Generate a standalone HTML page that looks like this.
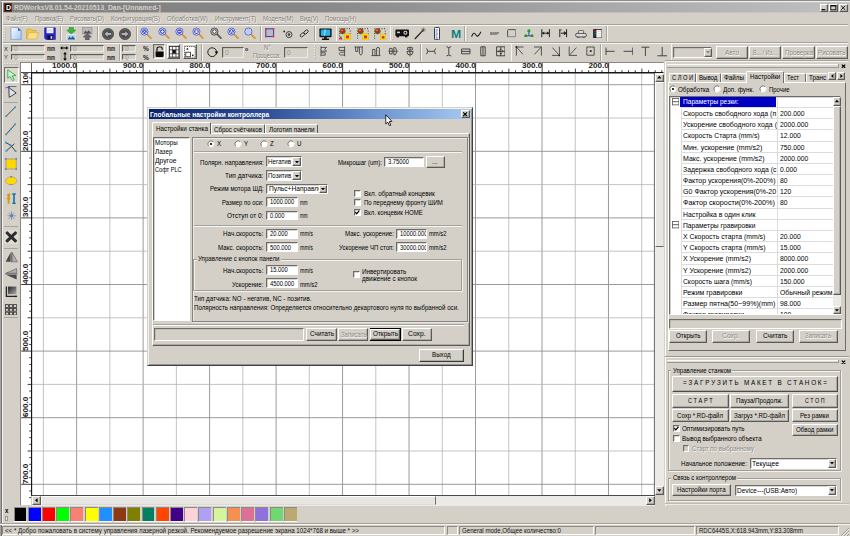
<!DOCTYPE html>
<html lang="ru"><head><meta charset="utf-8"><title>RDWorks</title>
<style>
*{box-sizing:border-box;margin:0;padding:0}
html,body{width:850px;height:536px;overflow:hidden;background:#d4d0c8;font-family:"Liberation Sans",sans-serif;font-size:7.3px;color:#000}
body{position:relative}
.a{position:absolute;display:block}
.t{white-space:pre;transform-origin:0 50%}
.btn{background:#d4d0c8;border-top:.7px solid #fff;border-left:.7px solid #fff;border-right:.8px solid #5a5a5a;border-bottom:.8px solid #5a5a5a;box-shadow:inset -.7px -.7px 0 #a09d96}
.fld{border-top:.8px solid #6e6c68;border-left:.8px solid #6e6c68;border-right:.7px solid #fff;border-bottom:.7px solid #fff;box-shadow:inset .6px .6px 0 #b0ada6}
.grp{border:.7px solid #a09d96;box-shadow:.7px .7px 0 #fff, inset .7px .7px 0 #fff}
</style></head>
<body>
<div class="a " style="left:0px;top:0px;width:850px;height:536px;background:#d4d0c8;"></div>
<div class="a " style="left:3px;top:2px;width:846px;height:11px;opacity:.45;background:linear-gradient(90deg,#808080 0%,#868686 35%,#a8a8a8 70%,#c0c0c0 100%);"></div>
<div class="a " style="left:3px;top:3px;width:846px;height:9px;background:linear-gradient(90deg,#808080 0%,#868686 35%,#a8a8a8 70%,#c0c0c0 100%);"></div>
<div class="a " style="left:4px;top:3.2px;width:8.4px;height:9px;background:#101010;border:.8px solid #7a2a14;"></div>
<span class="a t " style="left:5.65px;top:3.1px;font-size:7.6px;line-height:9.6px;color:#fff;font-weight:bold;transform:scaleX(0.93);">D</span>
<span class="a t " style="left:14px;top:3px;font-size:7.6px;line-height:9.6px;color:#d4d0c8;font-weight:bold;transform:scaleX(0.895);">RDWorksV8.01.54-20210513_Dan-[Unnamed-]</span>
<div class="a btn" style="left:820px;top:4px;width:8.2px;height:7.7px;"></div>
<div class="a btn" style="left:829px;top:4px;width:8.7px;height:7.7px;"></div>
<div class="a btn" style="left:839px;top:4px;width:8.9px;height:7.7px;"></div>
<svg class="a" style="left:820.2px;top:4.4px" width="8" height="7.2" viewBox="0 0 8 7.2"><rect x="1.6" y="5" width="3.6" height="1.2" fill="#000"/></svg>
<svg class="a" style="left:828.9px;top:4.4px" width="9" height="7.2" viewBox="0 0 9 7.2"><rect x="1.8" y="1.6" width="5" height="4.2" fill="none" stroke="#000" stroke-width=".8"/><rect x="1.4" y="1.2" width="5.8" height="1.2" fill="#000"/></svg>
<svg class="a" style="left:839.2px;top:4.3px" width="8.4" height="7.2" viewBox="0 0 8.4 7.2"><path d="M2.2 1.8 L6.2 5.8 M6.2 1.8 L2.2 5.8" stroke="#000" stroke-width=".9"/></svg>
<div class="a " style="left:0px;top:0px;width:850px;height:1px;background:#8c8c8c;"></div>
<div class="a " style="left:0px;top:0px;width:1px;height:536px;background:#a4a4a4;"></div>
<div class="a " style="left:1px;top:0px;width:1px;height:536px;background:#74726e;"></div>
<div class="a " style="left:2px;top:1px;width:0.8px;height:535px;background:#f4f3f0;"></div>
<div class="a " style="left:1px;top:1px;width:849px;height:1px;background:#efeeea;"></div>
<span class="a t " style="left:6px;top:13.95px;font-size:7.3px;line-height:9.3px;color:#7e7c76;transform:scaleX(0.792);text-shadow:.55px .55px 0 #fff;">Файл(F)</span>
<span class="a t " style="left:34.6px;top:13.95px;font-size:7.3px;line-height:9.3px;color:#7e7c76;transform:scaleX(0.82);text-shadow:.55px .55px 0 #fff;">Правка(E)</span>
<span class="a t " style="left:69.6px;top:13.95px;font-size:7.3px;line-height:9.3px;color:#7e7c76;transform:scaleX(0.815);text-shadow:.55px .55px 0 #fff;">Рисовать(D)</span>
<span class="a t " style="left:110.8px;top:13.95px;font-size:7.3px;line-height:9.3px;color:#7e7c76;transform:scaleX(0.834);text-shadow:.55px .55px 0 #fff;">Конфигурация(S)</span>
<span class="a t " style="left:166.8px;top:13.95px;font-size:7.3px;line-height:9.3px;color:#7e7c76;transform:scaleX(0.84);text-shadow:.55px .55px 0 #fff;">Обработка(W)</span>
<span class="a t " style="left:214.6px;top:13.95px;font-size:7.3px;line-height:9.3px;color:#7e7c76;transform:scaleX(0.835);text-shadow:.55px .55px 0 #fff;">Инструмент(T)</span>
<span class="a t " style="left:262.8px;top:13.95px;font-size:7.3px;line-height:9.3px;color:#7e7c76;transform:scaleX(0.824);text-shadow:.55px .55px 0 #fff;">Модель(M)</span>
<span class="a t " style="left:300px;top:13.95px;font-size:7.3px;line-height:9.3px;color:#7e7c76;transform:scaleX(0.811);text-shadow:.55px .55px 0 #fff;">Вид(V)</span>
<span class="a t " style="left:325px;top:13.95px;font-size:7.3px;line-height:9.3px;color:#7e7c76;transform:scaleX(0.819);text-shadow:.55px .55px 0 #fff;">Помощь(H)</span>
<div class="a " style="left:2.6px;top:23.8px;width:845.4px;height:0.7px;background:#a4a29c;"></div>
<div class="a " style="left:2.6px;top:24.5px;width:845.4px;height:0.7px;background:#f6f5f2;"></div>
<div class="a " style="left:2.6px;top:41.8px;width:845.4px;height:0.7px;background:#a4a29c;"></div>
<div class="a " style="left:2.6px;top:42.5px;width:845.4px;height:0.7px;background:#f6f5f2;"></div>
<svg class="a" style="left:4.2px;top:27px" width="2" height="13" viewBox="0 0 2 13"><rect x="0" y="0" width="1" height=".8" fill="#fff"/><rect x=".6" y="0.6" width=".8" height=".7" fill="#8c8a84"/><rect x="0" y="1.6" width="1" height=".8" fill="#fff"/><rect x=".6" y="2.2" width=".8" height=".7" fill="#8c8a84"/><rect x="0" y="3.2" width="1" height=".8" fill="#fff"/><rect x=".6" y="3.8" width=".8" height=".7" fill="#8c8a84"/><rect x="0" y="4.8" width="1" height=".8" fill="#fff"/><rect x=".6" y="5.4" width=".8" height=".7" fill="#8c8a84"/><rect x="0" y="6.4" width="1" height=".8" fill="#fff"/><rect x=".6" y="7" width=".8" height=".7" fill="#8c8a84"/><rect x="0" y="8" width="1" height=".8" fill="#fff"/><rect x=".6" y="8.6" width=".8" height=".7" fill="#8c8a84"/><rect x="0" y="9.6" width="1" height=".8" fill="#fff"/><rect x=".6" y="10.2" width=".8" height=".7" fill="#8c8a84"/><rect x="0" y="11.2" width="1" height=".8" fill="#fff"/><rect x=".6" y="11.8" width=".8" height=".7" fill="#8c8a84"/></svg>
<svg class="a" style="left:10px;top:26.8px" width="12" height="13.4" viewBox="0 0 12 13.4"><defs><linearGradient id="gnew" x1="0" y1="0" x2="1" y2="1"><stop offset="0" stop-color="#fff"/><stop offset="1" stop-color="#9cc4f0"/></linearGradient></defs><path d="M1 .6 H8 L11.2 3.8 V12.8 H1 Z" fill="url(#gnew)" stroke="#6a8ed0" stroke-width=".7"/><path d="M8 .6 V3.8 H11.2 Z" fill="#2f62c8"/></svg>
<svg class="a" style="left:26px;top:28px" width="13" height="12" viewBox="0 0 13 12"><path d="M.6 11 V2.4 Q.6 1 2 1 H4.6 L5.8 2.4 H10 V4.6" fill="#f2c84a" stroke="#c89a20" stroke-width=".6"/><path d="M.8 11 L3 4.6 H12.6 L10.2 11 Z" fill="#fbe08a" stroke="#d8a828" stroke-width=".6"/></svg>
<svg class="a" style="left:44px;top:26.8px" width="12" height="13.4" viewBox="0 0 12 13.4"><path d="M.6 .8 H11.4 V12.6 H2 L.6 11.2 Z" fill="#2828c8" stroke="#101090" stroke-width=".5"/><rect x="2.6" y=".8" width="6.8" height="5.4" fill="#fff"/><path d="M3.4 2.2 H8.6 M3.4 3.6 H8.6 M3.4 5 H8.6" stroke="#a8b0d8" stroke-width=".5"/><rect x="3.4" y="8.4" width="5.6" height="4.2" fill="#0a0a50"/><rect x="6.6" y="9.2" width="1.6" height="2.6" fill="#e8e8f8"/></svg>
<div class="a " style="left:60px;top:26px;width:0.7px;height:15px;background:#a4a29c;"></div>
<div class="a " style="left:60.7px;top:26px;width:0.7px;height:15px;background:#f6f5f2;"></div>
<svg class="a" style="left:65.6px;top:26.6px" width="10.6" height="13.6" viewBox="0 0 10.6 13.6"><path d="M3.2 .4 H7.4 V3.2 H9.8 L5.3 7 L.8 3.2 H3.2 Z" fill="#38b838" stroke="#1c7c1c" stroke-width=".5"/><rect x=".8" y="7.4" width="9.2" height="5.6" fill="#a8d0f0" stroke="#f4f4f4" stroke-width=".8"/><path d="M1.4 12.4 L3.6 9.6 L5 11.2 L6.6 9.2 L9.4 12.4 Z" fill="#285890"/></svg>
<svg class="a" style="left:82.2px;top:26.6px" width="10.6" height="13.6" viewBox="0 0 10.6 13.6"><rect x=".6" y=".6" width="9.4" height="6.4" fill="#b8b8b8" stroke="#8c8c8c" stroke-width=".6"/><path d="M1.4 6.4 L3.6 3.6 L5 5.2 L6.6 3.2 L9.4 6.4 Z" fill="#505050"/><path d="M5.3 6.6 L9.4 10 H7.2 V13.2 H3.4 V10 H1.2 Z" fill="#686868" stroke="#383838" stroke-width=".5"/></svg>
<div class="a " style="left:97.2px;top:26px;width:0.7px;height:15px;background:#a4a29c;"></div>
<div class="a " style="left:97.9px;top:26px;width:0.7px;height:15px;background:#f6f5f2;"></div>
<svg class="a" style="left:101.6px;top:27.6px" width="12" height="12" viewBox="0 0 12 12"><circle cx="6" cy="6" r="5.6" fill="#4c4c4c" stroke="#303030" stroke-width=".6"/><circle cx="6" cy="6" r="4.6" fill="none" stroke="#767676" stroke-width=".6"/><path d="M2.6 6 L5.8 3.2 V4.9 H9.2 V7.1 H5.8 V8.8 Z" fill="#b4b4b4"/></svg>
<svg class="a" style="left:118.6px;top:27.6px" width="12" height="12" viewBox="0 0 12 12"><circle cx="6" cy="6" r="5.6" fill="#4c4c4c" stroke="#303030" stroke-width=".6"/><circle cx="6" cy="6" r="4.6" fill="none" stroke="#767676" stroke-width=".6"/><g transform="translate(12,0) scale(-1,1)"><path d="M2.6 6 L5.8 3.2 V4.9 H9.2 V7.1 H5.8 V8.8 Z" fill="#b4b4b4"/></g></svg>
<div class="a " style="left:136px;top:26px;width:0.7px;height:15px;background:#a4a29c;"></div>
<div class="a " style="left:136.7px;top:26px;width:0.7px;height:15px;background:#f6f5f2;"></div>
<svg class="a" style="left:140px;top:27px" width="12" height="12.4" viewBox="0 0 12 12.4"><path d="M7 7.2 L10.9 11.2" stroke="#d8982c" stroke-width="1.8" stroke-linecap="round"/><circle cx="4.4" cy="4.6" r="3.6" fill="#dfe6fb" stroke="#5c58c4" stroke-width=".9"/><circle cx="4.4" cy="4.6" r="2.4" fill="#3450cc"/><path d="M3.3 3.5 L5.5 5.7 M5.5 3.5 L3.3 5.7" stroke="#fff" stroke-width=".7"/></svg>
<svg class="a" style="left:157.8px;top:27px" width="12" height="12.4" viewBox="0 0 12 12.4"><path d="M7 7.2 L10.9 11.2" stroke="#d8982c" stroke-width="1.8" stroke-linecap="round"/><circle cx="4.4" cy="4.6" r="3.6" fill="#dfe6fb" stroke="#5c58c4" stroke-width=".9"/><circle cx="4.4" cy="4.6" r="2.4" fill="#3450cc"/><path d="M3 4.6 H5.8 M4.4 3.2 V6" stroke="#fff" stroke-width=".9"/></svg>
<svg class="a" style="left:175.2px;top:27px" width="12" height="12.4" viewBox="0 0 12 12.4"><path d="M7 7.2 L10.9 11.2" stroke="#d8982c" stroke-width="1.8" stroke-linecap="round"/><circle cx="4.4" cy="4.6" r="3.6" fill="#dfe6fb" stroke="#5c58c4" stroke-width=".9"/><circle cx="4.4" cy="4.6" r="2.4" fill="#3450cc"/><path d="M3 4.6 H5.8" stroke="#fff" stroke-width=".9"/></svg>
<svg class="a" style="left:192.2px;top:27px" width="12" height="12.4" viewBox="0 0 12 12.4"><path d="M7 7.2 L10.9 11.2" stroke="#d8982c" stroke-width="1.8" stroke-linecap="round"/><circle cx="4.4" cy="4.6" r="3.6" fill="#dfe6fb" stroke="#5c58c4" stroke-width=".9"/><circle cx="4.4" cy="4.6" r="2.4" fill="#3450cc"/><rect x="3.5" y="3.2" width="2" height="2.8" fill="#f0f4ff"/></svg>
<svg class="a" style="left:210px;top:27px" width="12" height="12.4" viewBox="0 0 12 12.4"><path d="M7 7.2 L10.9 11.2" stroke="#5e5e5e" stroke-width="1.8" stroke-linecap="round"/><circle cx="4.4" cy="4.6" r="3.6" fill="#bcbcbc" stroke="#484848" stroke-width=".9"/><circle cx="4.4" cy="4.6" r="2.4" fill="#6e6e6e"/><path d="M3 4.6 H5.8 M4.4 3.2 V6" stroke="#fff" stroke-width=".9"/></svg>
<svg class="a" style="left:226.8px;top:27px" width="12" height="12.4" viewBox="0 0 12 12.4"><path d="M7 7.2 L10.9 11.2" stroke="#d8982c" stroke-width="1.8" stroke-linecap="round"/><circle cx="4.4" cy="4.6" r="3.6" fill="#dfe6fb" stroke="#5c58c4" stroke-width=".9"/><circle cx="4.4" cy="4.6" r="2.4" fill="#3450cc"/><path d="M3.4 6 L4.4 3.2 L5.4 6" stroke="#fff" stroke-width=".8" fill="none"/></svg>
<svg class="a" style="left:244.4px;top:27px" width="12" height="12.4" viewBox="0 0 12 12.4"><path d="M7 7.2 L10.9 11.2" stroke="#d8982c" stroke-width="1.8" stroke-linecap="round"/><circle cx="4.4" cy="4.6" r="3.6" fill="#dfe6fb" stroke="#5c58c4" stroke-width=".9"/><circle cx="4.4" cy="4.6" r="2.6" fill="#b4d0f8"/></svg>
<div class="a " style="left:260.4px;top:26px;width:0.7px;height:15px;background:#a4a29c;"></div>
<div class="a " style="left:261.1px;top:26px;width:0.7px;height:15px;background:#f6f5f2;"></div>
<svg class="a" style="left:265.4px;top:28.2px" width="9.4" height="9.4" viewBox="0 0 9.4 9.4"><rect x=".8" y=".8" width="7.8" height="7.8" rx="1" fill="#bcbcc0" stroke="#2838c8" stroke-width="1"/><rect x="0" y="0" width="1.8" height="1.8" fill="#e03030"/><rect x="7.6" y="7.6" width="1.8" height="1.8" fill="#e03030"/><rect x="7.6" y="0" width="1.8" height="1.8" fill="#e03030"/><rect x="0" y="7.6" width="1.8" height="1.8" fill="#e03030"/></svg>
<svg class="a" style="left:282.6px;top:29.6px" width="10" height="8.4" viewBox="0 0 10 8.4"><circle cx="1.2" cy="1.4" r=".9" fill="#222"/><circle cx="6" cy="4.6" r="3" fill="none" stroke="#333" stroke-width=".9"/><circle cx="6" cy="4.6" r="1.3" fill="#444"/></svg>
<svg class="a" style="left:299.4px;top:29px" width="10.4" height="9" viewBox="0 0 10.4 9"><ellipse cx="3.4" cy="5.8" rx="2.6" ry="1.5" transform="rotate(-40 3.4 5.8)" fill="none" stroke="#333" stroke-width=".9"/><ellipse cx="7" cy="3" rx="2.6" ry="1.5" transform="rotate(-40 7 3)" fill="none" stroke="#333" stroke-width=".9"/></svg>
<div class="a " style="left:314px;top:26px;width:0.7px;height:15px;background:#a4a29c;"></div>
<div class="a " style="left:314.7px;top:26px;width:0.7px;height:15px;background:#f6f5f2;"></div>
<svg class="a" style="left:318.8px;top:27.6px" width="13" height="12.6" viewBox="0 0 13 12.6"><rect x=".4" y=".4" width="12.2" height="8.8" rx=".8" fill="#111"/><rect x="1.8" y="1.6" width="9.4" height="6.2" fill="#28b0e8"/><path d="M5.4 1.6 L7.2 1.6 L6 7.8 L4.6 7.8 Z" fill="#7cd4f8"/><rect x="5" y="9.2" width="3" height="1.6" fill="#111"/><rect x="2.8" y="10.6" width="7.4" height="1.6" rx=".6" fill="#111"/></svg>
<div class="a " style="left:335.6px;top:26px;width:0.7px;height:15px;background:#a4a29c;"></div>
<div class="a " style="left:336.3px;top:26px;width:0.7px;height:15px;background:#f6f5f2;"></div>
<svg class="a" style="left:339.2px;top:27.6px" width="12.4" height="12.4" viewBox="0 0 12.4 12.4"><rect x="0.4" y="0.2" width=".9" height=".9" fill="#222"/><rect x="2.8" y="0.2" width=".9" height=".9" fill="#222"/><rect x="5.2" y="0.2" width=".9" height=".9" fill="#222"/><rect x="7.6" y="0.2" width=".9" height=".9" fill="#222"/><rect x="10" y="0.2" width=".9" height=".9" fill="#222"/><rect x="0.2" y="2.6" width=".9" height=".9" fill="#222"/><rect x="0.2" y="5" width=".9" height=".9" fill="#222"/><rect x="0.2" y="7.4" width=".9" height=".9" fill="#222"/><rect x="0.2" y="9.8" width=".9" height=".9" fill="#222"/><rect x="10.8" y="2.6" width=".9" height=".9" fill="#222"/><rect x="10.8" y="5" width=".9" height=".9" fill="#222"/><circle cx="3.6" cy="3.2" r="2.7" fill="#d81818" stroke="#209020" stroke-width=".8"/><circle cx="3" cy="2.4" r=".8" fill="#f88"/><rect x="5.4" y="5.8" width="6" height="6.2" fill="#f8e010" stroke="#c8b000" stroke-width=".4"/><rect x="7" y="7.4" width="3" height="3" fill="#e83030"/><path d="M.6 11.8 L1.8 8.6 L3 11.8 M1 10.8 H2.6" stroke="#d01818" stroke-width=".8" fill="none"/></svg>
<svg class="a" style="left:356.8px;top:27.6px" width="12.4" height="12.4" viewBox="0 0 12.4 12.4"><rect x="0.4" y="0.2" width=".9" height=".9" fill="#222"/><rect x="2.8" y="0.2" width=".9" height=".9" fill="#222"/><rect x="5.2" y="0.2" width=".9" height=".9" fill="#222"/><rect x="7.6" y="0.2" width=".9" height=".9" fill="#222"/><rect x="10" y="0.2" width=".9" height=".9" fill="#222"/><rect x="0.2" y="2.6" width=".9" height=".9" fill="#222"/><rect x="0.2" y="5" width=".9" height=".9" fill="#222"/><rect x="0.2" y="7.4" width=".9" height=".9" fill="#222"/><rect x="0.2" y="9.8" width=".9" height=".9" fill="#222"/><rect x="10.8" y="2.6" width=".9" height=".9" fill="#222"/><rect x="10.8" y="5" width=".9" height=".9" fill="#222"/><circle cx="3.6" cy="3.2" r="2.7" fill="#d81818" stroke="#209020" stroke-width=".8"/><circle cx="3" cy="2.4" r=".8" fill="#f88"/><rect x="5.4" y="5.8" width="6" height="6.2" fill="#f8e010" stroke="#c8b000" stroke-width=".4"/><rect x="7" y="7.4" width="3" height="3" fill="#e83030"/></svg>
<svg class="a" style="left:374.4px;top:27.6px" width="12.4" height="12.4" viewBox="0 0 12.4 12.4"><rect x="0.4" y="0.2" width=".9" height=".9" fill="#222"/><rect x="2.8" y="0.2" width=".9" height=".9" fill="#222"/><rect x="5.2" y="0.2" width=".9" height=".9" fill="#222"/><rect x="7.6" y="0.2" width=".9" height=".9" fill="#222"/><rect x="10" y="0.2" width=".9" height=".9" fill="#222"/><rect x="0.2" y="2.6" width=".9" height=".9" fill="#222"/><rect x="0.2" y="5" width=".9" height=".9" fill="#222"/><rect x="0.2" y="7.4" width=".9" height=".9" fill="#222"/><rect x="0.2" y="9.8" width=".9" height=".9" fill="#222"/><rect x="10.8" y="2.6" width=".9" height=".9" fill="#222"/><rect x="10.8" y="5" width=".9" height=".9" fill="#222"/><circle cx="3.6" cy="3.2" r="2.7" fill="#d81818" stroke="#209020" stroke-width=".8"/><circle cx="3" cy="2.4" r=".8" fill="#f88"/><rect x="6.4" y="6.6" width="5.2" height="5.4" fill="#f8e010" stroke="#c8b000" stroke-width=".4"/><rect x="7.8" y="8" width="2.6" height="2.6" fill="#e83030"/></svg>
<div class="a " style="left:389.6px;top:26px;width:0.7px;height:15px;background:#a4a29c;"></div>
<div class="a " style="left:390.3px;top:26px;width:0.7px;height:15px;background:#f6f5f2;"></div>
<svg class="a" style="left:392.2px;top:27px" width="2" height="13" viewBox="0 0 2 13"><rect x="0" y="0" width="1" height=".8" fill="#fff"/><rect x=".6" y="0.6" width=".8" height=".7" fill="#8c8a84"/><rect x="0" y="1.6" width="1" height=".8" fill="#fff"/><rect x=".6" y="2.2" width=".8" height=".7" fill="#8c8a84"/><rect x="0" y="3.2" width="1" height=".8" fill="#fff"/><rect x=".6" y="3.8" width=".8" height=".7" fill="#8c8a84"/><rect x="0" y="4.8" width="1" height=".8" fill="#fff"/><rect x=".6" y="5.4" width=".8" height=".7" fill="#8c8a84"/><rect x="0" y="6.4" width="1" height=".8" fill="#fff"/><rect x=".6" y="7" width=".8" height=".7" fill="#8c8a84"/><rect x="0" y="8" width="1" height=".8" fill="#fff"/><rect x=".6" y="8.6" width=".8" height=".7" fill="#8c8a84"/><rect x="0" y="9.6" width="1" height=".8" fill="#fff"/><rect x=".6" y="10.2" width=".8" height=".7" fill="#8c8a84"/><rect x="0" y="11.2" width="1" height=".8" fill="#fff"/><rect x=".6" y="11.8" width=".8" height=".7" fill="#8c8a84"/></svg>
<svg class="a" style="left:395.4px;top:29.2px" width="14.4" height="8.8" viewBox="0 0 14.4 8.8"><rect x=".4" y=".6" width="13.6" height="6.6" rx="1" fill="#111"/><circle cx="10.4" cy="3.8" r="2" fill="#ddd"/><circle cx="10.4" cy="3.8" r="1" fill="#111"/><rect x="2" y="2.6" width="3" height="1.6" fill="#ccc"/><rect x="1.6" y="7" width="2.4" height="1.4" fill="#111"/><rect x="10" y="7" width="2.4" height="1.4" fill="#111"/></svg>
<svg class="a" style="left:413.6px;top:26.8px" width="12" height="13" viewBox="0 0 12 13"><path d="M.8 12 L9.4 2.8" stroke="#222" stroke-width="1.2"/><path d="M9.4 .4 V5 M7.2 2.8 H11.6 M7.8 1.2 L11 4.4 M11 1.2 L7.8 4.4" stroke="#444" stroke-width=".5"/></svg>
<svg class="a" style="left:433.8px;top:26.8px" width="6" height="13.2" viewBox="0 0 6 13.2"><rect x=".5" y=".5" width="5" height="12.2" rx=".8" fill="#fff" stroke="#222" stroke-width=".9"/><path d="M1.6 3 H4 M1.6 5 H3.4 M1.6 7 H4 M1.6 9 H3.4 M1.6 11 H4" stroke="#3858e8" stroke-width=".9"/></svg>
<span class="a t " style="left:450.5px;top:27.5px;font-size:11px;line-height:13px;color:#108080;font-weight:bold;transform:scaleX(1.113);">M</span>
<div class="a " style="left:463.8px;top:26px;width:0.7px;height:15px;background:#a4a29c;"></div>
<div class="a " style="left:464.5px;top:26px;width:0.7px;height:15px;background:#f6f5f2;"></div>
<svg class="a" style="left:465.8px;top:27px" width="2" height="13" viewBox="0 0 2 13"><rect x="0" y="0" width="1" height=".8" fill="#fff"/><rect x=".6" y="0.6" width=".8" height=".7" fill="#8c8a84"/><rect x="0" y="1.6" width="1" height=".8" fill="#fff"/><rect x=".6" y="2.2" width=".8" height=".7" fill="#8c8a84"/><rect x="0" y="3.2" width="1" height=".8" fill="#fff"/><rect x=".6" y="3.8" width=".8" height=".7" fill="#8c8a84"/><rect x="0" y="4.8" width="1" height=".8" fill="#fff"/><rect x=".6" y="5.4" width=".8" height=".7" fill="#8c8a84"/><rect x="0" y="6.4" width="1" height=".8" fill="#fff"/><rect x=".6" y="7" width=".8" height=".7" fill="#8c8a84"/><rect x="0" y="8" width="1" height=".8" fill="#fff"/><rect x=".6" y="8.6" width=".8" height=".7" fill="#8c8a84"/><rect x="0" y="9.6" width="1" height=".8" fill="#fff"/><rect x=".6" y="10.2" width=".8" height=".7" fill="#8c8a84"/><rect x="0" y="11.2" width="1" height=".8" fill="#fff"/><rect x=".6" y="11.8" width=".8" height=".7" fill="#8c8a84"/></svg>
<svg class="a" style="left:471px;top:30.6px" width="10.6" height="7" viewBox="0 0 10.6 7"><path d="M.6 5.8 C2 1.6 3.4 1.4 4.8 3.8 S7.6 5.4 10 .8" fill="none" stroke="#222" stroke-width="1.1"/></svg>
<span class="a t " style="left:489.75px;top:30.8px;font-size:4.4px;line-height:6.4px;color:#5a5a5a;font-weight:bold;transform:scaleX(0.93);">BMP</span>
<svg class="a" style="left:506.8px;top:29.2px" width="9.6" height="8.8" viewBox="0 0 9.6 8.8"><rect x=".6" y=".6" width="8.2" height="7.4" rx=".8" fill="none" stroke="#444" stroke-width=".9"/><path d="M1.2 8.4 H9.2 V1.4" stroke="#fff" stroke-width=".5" fill="none"/></svg>
<svg class="a" style="left:524px;top:28.6px" width="9.8" height="8.8" viewBox="0 0 9.8 8.8"><path d="M4.9 2 V6.6 M1.6 6.8 H8.2" stroke="#2038c8" stroke-width=".9"/><circle cx="4.9" cy="1.8" r="1.6" fill="#18a028"/><circle cx="1.8" cy="6.8" r="1.6" fill="#18a028"/><circle cx="8" cy="6.8" r="1.6" fill="#18a028"/></svg>
<svg class="a" style="left:541.4px;top:29.4px" width="9.2" height="8.4" viewBox="0 0 9.2 8.4"><path d="M.8 .2 V8.2 M8.4 .2 V8.2 M1 4.2 H8.2" stroke="#222" stroke-width="1"/><path d="M1 4.2 L3.2 2.6 V5.8 Z M8.2 4.2 L6 2.6 V5.8 Z" fill="#222"/></svg>
<svg class="a" style="left:559.2px;top:29.4px" width="8.4" height="8.4" viewBox="0 0 8.4 8.4"><path d="M.8 .2 V8.2 M7.6 .2 V8.2 M2 4.2 H7.4" stroke="#222" stroke-width="1"/><path d="M.8 1 H3 M7.4 4.2 L5.2 2.6 V5.8 Z" stroke="#222" stroke-width=".6" fill="#222"/></svg>
<svg class="a" style="left:574.8px;top:29.6px" width="12" height="8.8" viewBox="0 0 12 8.8"><path d="M3.4 3.6 V1.2 Q3.4 .6 4.2 .6 H7.8 Q8.6 .6 8.6 1.2 V3.6" fill="#e8e8e8" stroke="#444" stroke-width=".8"/><rect x=".6" y="3.4" width="10.8" height="3.6" rx="1.6" fill="#d8d8d8" stroke="#444" stroke-width=".9"/><path d="M2 7 Q6 9.4 10 7" fill="#ccc" stroke="#444" stroke-width=".8"/></svg>
<svg class="a" style="left:592.8px;top:28.6px" width="9.6" height="9.6" viewBox="0 0 9.6 9.6"><rect x=".6" y=".6" width="8.4" height="8.4" fill="#fff" stroke="#222" stroke-width=".9"/><path d="M.8 .8 H3.4 V9 H.8 Z" fill="#222"/><rect x="1.4" y="1.6" width="1.4" height="1.4" fill="#e02020"/><rect x="1.4" y="3.8" width="1.4" height="1.4" fill="#20a020"/><rect x="1.4" y="6" width="1.4" height="1.4" fill="#2040e0"/><path d="M4.4 2.4 H8 M4.4 4.6 H8 M4.4 6.8 H8" stroke="#aaa" stroke-width=".5"/></svg>
<div class="a " style="left:606.4px;top:26px;width:0.7px;height:15px;background:#a4a29c;"></div>
<div class="a " style="left:607.1px;top:26px;width:0.7px;height:15px;background:#f6f5f2;"></div>
<span class="a t " style="left:4.2px;top:44.8px;font-size:6.2px;line-height:8.2px;color:#1e1e28;transform:scaleX(0.93);">X</span>
<span class="a t " style="left:4.2px;top:53.4px;font-size:6.2px;line-height:8.2px;color:#1e1e28;transform:scaleX(0.93);">Y</span>
<div class="a fld" style="left:11.2px;top:44.8px;width:33.4px;height:7px;background:#d4d0c8;border-right-color:#eceae6;border-bottom-color:#eceae6;border-top-color:#5e5c58;border-left-color:#5e5c58;"></div>
<span class="a t " style="left:13.8px;top:43.85px;font-size:7.3px;line-height:9.3px;color:#9a978f;transform:scaleX(0.93);">0</span>
<div class="a fld" style="left:11.2px;top:53.6px;width:33.4px;height:6.8px;background:#d4d0c8;border-right-color:#eceae6;border-bottom-color:#eceae6;border-top-color:#5e5c58;border-left-color:#5e5c58;"></div>
<span class="a t " style="left:13.8px;top:52.55px;font-size:7.3px;line-height:9.3px;color:#9a978f;transform:scaleX(0.93);">0</span>
<span class="a t " style="left:47px;top:44px;font-size:7px;line-height:9px;color:#1a1a1a;font-weight:bold;transform:scaleX(0.643);">mm</span>
<span class="a t " style="left:47px;top:52.7px;font-size:7px;line-height:9px;color:#1a1a1a;font-weight:bold;transform:scaleX(0.643);">mm</span>
<div class="a " style="left:60.2px;top:43.6px;width:8.4px;height:17.4px;background:#c4c0b8;"></div>
<svg class="a" style="left:60.4px;top:44.4px" width="8.4" height="8" viewBox="0 0 8.4 8"><path d="M1 4 H7.4" stroke="#000" stroke-width="1"/><path d="M.2 4 L2.3 2.2 V5.8 Z M8.2 4 L6.1 2.2 V5.8 Z" fill="#000"/></svg>
<svg class="a" style="left:61.6px;top:52.4px" width="6" height="8.8" viewBox="0 0 6 8.8"><path d="M3 1 V7.8" stroke="#000" stroke-width="1"/><path d="M3 .1 L1.2 2.2 H4.8 Z M3 8.7 L1.2 6.6 H4.8 Z" fill="#000"/></svg>
<div class="a fld" style="left:70.2px;top:44.8px;width:33.6px;height:7px;background:#d4d0c8;border-right-color:#eceae6;border-bottom-color:#eceae6;border-top-color:#5e5c58;border-left-color:#5e5c58;"></div>
<span class="a t " style="left:72.8px;top:43.85px;font-size:7.3px;line-height:9.3px;color:#9a978f;transform:scaleX(0.93);">0</span>
<div class="a fld" style="left:70.2px;top:53.6px;width:33.6px;height:6.8px;background:#d4d0c8;border-right-color:#eceae6;border-bottom-color:#eceae6;border-top-color:#5e5c58;border-left-color:#5e5c58;"></div>
<span class="a t " style="left:72.8px;top:52.55px;font-size:7.3px;line-height:9.3px;color:#9a978f;transform:scaleX(0.93);">0</span>
<span class="a t " style="left:107px;top:44px;font-size:7px;line-height:9px;color:#1a1a1a;font-weight:bold;transform:scaleX(0.643);">mm</span>
<span class="a t " style="left:107px;top:52.7px;font-size:7px;line-height:9px;color:#1a1a1a;font-weight:bold;transform:scaleX(0.643);">mm</span>
<div class="a " style="left:119.4px;top:44px;width:0.7px;height:17px;background:#a4a29c;"></div>
<div class="a " style="left:120.1px;top:44px;width:0.7px;height:17px;background:#f6f5f2;"></div>
<div class="a fld" style="left:122px;top:44.8px;width:14.4px;height:7px;background:#d4d0c8;border-right-color:#eceae6;border-bottom-color:#eceae6;border-top-color:#5e5c58;border-left-color:#5e5c58;"></div>
<span class="a t " style="left:124.6px;top:43.85px;font-size:7.3px;line-height:9.3px;color:#9a978f;transform:scaleX(0.93);">0</span>
<div class="a fld" style="left:122px;top:53.6px;width:14.4px;height:6.8px;background:#d4d0c8;border-right-color:#eceae6;border-bottom-color:#eceae6;border-top-color:#5e5c58;border-left-color:#5e5c58;"></div>
<span class="a t " style="left:124.6px;top:52.55px;font-size:7.3px;line-height:9.3px;color:#9a978f;transform:scaleX(0.93);">0</span>
<span class="a t " style="left:143px;top:44.3px;font-size:7px;line-height:9px;color:#222;font-weight:bold;transform:scaleX(0.93);">%</span>
<span class="a t " style="left:143px;top:52.9px;font-size:7px;line-height:9px;color:#222;font-weight:bold;transform:scaleX(0.93);">%</span>
<div class="a fld" style="left:152.6px;top:44.4px;width:12.8px;height:15px;background:#d4d0c8;"></div>
<svg class="a" style="left:153.6px;top:45.4px" width="11" height="13.4" viewBox="0 0 11 13.4"><path d="M3 6.4 V4 Q3 2 5 2 H6.6 Q8.2 2 8.2 3.8 V4.8" fill="none" stroke="#111" stroke-width="1.2"/><path d="M1.6 6.4 H9.6 V10.8 Q9.6 12 8.4 12 H2.8 Q1.6 12 1.6 10.8 Z" fill="#0a0a0a"/></svg>
<div class="a btn" style="left:167.4px;top:44.4px;width:12.6px;height:15px;"></div>
<svg class="a" style="left:168.6px;top:46px" width="10.4" height="11.6" viewBox="0 0 10.4 11.6"><rect x=".5" y=".5" width="9.4" height="10.6" fill="#fff" stroke="#222" stroke-width=".8"/><path d="M3.4 .6 V11 M7 .6 V11 M.6 3.8 H9.8 M.6 7.8 H9.8" stroke="#222" stroke-width=".7"/><rect x="3.6" y="4" width="3.2" height="3.6" fill="#111"/></svg>
<div class="a btn" style="left:183px;top:44.4px;width:14px;height:15px;"></div>
<svg class="a" style="left:184.2px;top:45.6px" width="11.6" height="12.4" viewBox="0 0 11.6 12.4"><rect x=".5" y=".5" width="10.6" height="11.4" fill="#fff" stroke="#333" stroke-width=".8" stroke-dasharray="1.2 1"/><rect x="1.8" y="6.2" width="4.6" height="4.6" fill="#fff" stroke="#222" stroke-width=".8"/><rect x="2.6" y="2.2" width="1.6" height="1.6" fill="#222"/><rect x="8" y="8.6" width="1.6" height="1.6" fill="#222"/></svg>
<div class="a " style="left:201.4px;top:44px;width:0.7px;height:17px;background:#a4a29c;"></div>
<div class="a " style="left:202.1px;top:44px;width:0.7px;height:17px;background:#f6f5f2;"></div>
<svg class="a" style="left:207.4px;top:47px" width="12" height="10.6" viewBox="0 0 12 10.6"><circle cx="5.2" cy="5.2" r="4.4" fill="none" stroke="#111" stroke-width=".9"/><path d="M7.6 4.6 H11.4 L9.5 7.6 Z" fill="#111"/></svg>
<div class="a fld" style="left:222.2px;top:46.8px;width:21.6px;height:10.8px;background:#d4d0c8;border-right-color:#eceae6;border-bottom-color:#eceae6;border-top-color:#5e5c58;border-left-color:#5e5c58;"></div>
<span class="a t " style="left:224.8px;top:47.75px;font-size:7.3px;line-height:9.3px;color:#9a978f;transform:scaleX(0.93);">0</span>
<span class="a t " style="left:244.8px;top:45.8px;font-size:5.6px;line-height:7.6px;color:#111;font-weight:bold;transform:scaleX(0.93);">o</span>
<span class="a t " style="left:263.96px;top:44px;font-size:6.6px;line-height:8.6px;color:#7e7c76;transform:scaleX(0.93);text-shadow:.5px .5px 0 #fff;">N°</span>
<span class="a t " style="left:253.4px;top:51.5px;font-size:6.8px;line-height:8.8px;color:#7e7c76;transform:scaleX(0.849);text-shadow:.5px .5px 0 #fff;">Процесса:</span>
<div class="a fld" style="left:284.2px;top:46.8px;width:23.8px;height:10.8px;background:#d4d0c8;border-right-color:#eceae6;border-bottom-color:#eceae6;border-top-color:#5e5c58;border-left-color:#5e5c58;"></div>
<span class="a t " style="left:286.8px;top:47.75px;font-size:7.3px;line-height:9.3px;color:#9a978f;transform:scaleX(0.93);">0</span>
<svg class="a" style="left:314.2px;top:45px" width="2" height="15" viewBox="0 0 2 15"><rect x="0" y="0" width="1" height=".8" fill="#fff"/><rect x=".6" y="0.6" width=".8" height=".7" fill="#8c8a84"/><rect x="0" y="1.6" width="1" height=".8" fill="#fff"/><rect x=".6" y="2.2" width=".8" height=".7" fill="#8c8a84"/><rect x="0" y="3.2" width="1" height=".8" fill="#fff"/><rect x=".6" y="3.8" width=".8" height=".7" fill="#8c8a84"/><rect x="0" y="4.8" width="1" height=".8" fill="#fff"/><rect x=".6" y="5.4" width=".8" height=".7" fill="#8c8a84"/><rect x="0" y="6.4" width="1" height=".8" fill="#fff"/><rect x=".6" y="7" width=".8" height=".7" fill="#8c8a84"/><rect x="0" y="8" width="1" height=".8" fill="#fff"/><rect x=".6" y="8.6" width=".8" height=".7" fill="#8c8a84"/><rect x="0" y="9.6" width="1" height=".8" fill="#fff"/><rect x=".6" y="10.2" width=".8" height=".7" fill="#8c8a84"/><rect x="0" y="11.2" width="1" height=".8" fill="#fff"/><rect x=".6" y="11.8" width=".8" height=".7" fill="#8c8a84"/><rect x="0" y="12.8" width="1" height=".8" fill="#fff"/><rect x=".6" y="13.4" width=".8" height=".7" fill="#8c8a84"/></svg>
<svg class="a" style="left:320.4px;top:46.4px" width="8.4" height="10.6" viewBox="0 0 8.4 10.6"><path d="M1 .4 V10.2 M1 1.4 H6.6 L4.6 3.4 L6.6 5.2 H1 M1 6.8 H5.2 V9.2 H1" stroke="#333" stroke-width="0.79" fill="none"/></svg>
<svg class="a" style="left:337px;top:46.4px" width="8.8" height="10.6" viewBox="0 0 8.8 10.6"><path d="M7.6 .4 V10.2 M7.6 1.4 H2 V4.4 H7.6 M7.6 6.2 H3.4 L2 7.6 L3.4 9 H7.6" stroke="#333" stroke-width="0.79" fill="none"/></svg>
<svg class="a" style="left:353.6px;top:46.4px" width="9.8" height="10.6" viewBox="0 0 9.8 10.6"><path d="M.4 1 H9.4 M1.6 1 V5.4 H3.8 V1 M5.4 1 V7.4 L6.8 9.2 L8.2 7.4 V1" stroke="#333" stroke-width="0.79" fill="none"/></svg>
<svg class="a" style="left:371.4px;top:46.4px" width="9.8" height="10.6" viewBox="0 0 9.8 10.6"><path d="M.4 9.6 H9.4 M1.6 9.6 V3.4 H4 V9.6 M5.6 9.6 V2 Q7 .4 8.4 2 V9.6" stroke="#333" stroke-width="0.79" fill="none"/></svg>
<svg class="a" style="left:388.2px;top:46.4px" width="9.8" height="10.6" viewBox="0 0 9.8 10.6"><path d="M.4 5.2 H9.6 M1.6 2.4 H4.2 V8 H1.6 Z M5.8 1.6 H7.4 L9 5.2 L7.4 8.8 H5.8 Z" stroke="#333" stroke-width="0.79" fill="none"/></svg>
<svg class="a" style="left:406.2px;top:46.4px" width="8" height="10.6" viewBox="0 0 8 10.6"><path d="M4 .4 V10.4 M1.6 1.6 H6.4 V4 H1.6 Z M.8 5.6 H7.2 L6 8.6 H2 Z" stroke="#333" stroke-width="0.79" fill="none"/></svg>
<div class="a " style="left:420.2px;top:44px;width:0.7px;height:17px;background:#a4a29c;"></div>
<div class="a " style="left:420.9px;top:44px;width:0.7px;height:17px;background:#f6f5f2;"></div>
<svg class="a" style="left:426px;top:46.4px" width="10.2" height="10.6" viewBox="0 0 10.2 10.6"><path d="M.6 2.4 Q3 5.2 .6 8.2 M9.6 2.4 Q7.2 5.2 9.6 8.2 M2 5.3 H8.2" stroke="#333" stroke-width="0.88" fill="none"/></svg>
<svg class="a" style="left:445px;top:46.4px" width="7.6" height="10.6" viewBox="0 0 7.6 10.6"><path d="M1.4 .6 Q3.8 2.6 6.2 .6 M1.4 10 Q3.8 8 6.2 10 M3.8 2 V8.6" stroke="#333" stroke-width="0.88" fill="none"/></svg>
<svg class="a" style="left:461px;top:46.4px" width="9.6" height="10.6" viewBox="0 0 9.6 10.6"><path d="M.6 3 H9 V7.8 H.6 Z M.6 5.4 H9" stroke="#333" stroke-width="0.88" fill="none"/></svg>
<svg class="a" style="left:479.6px;top:46.4px" width="6" height="10.6" viewBox="0 0 6 10.6"><path d="M.8 .8 H5.2 V9.8 H.8 Z M3 .8 V9.8" stroke="#333" stroke-width="0.88" fill="none"/></svg>
<svg class="a" style="left:495.6px;top:46.4px" width="9.6" height="10.6" viewBox="0 0 9.6 10.6"><path d="M.6 .8 H9 V9.8 H.6 Z M4.8 .8 V9.8 M.6 5.3 H9" stroke="#333" stroke-width="0.88" fill="none"/><path d="M2 5.3 L3.4 4 V6.6 Z M7.6 5.3 L6.2 4 V6.6 Z M4.8 2.4 L3.6 3.6 H6 Z M4.8 8.2 L3.6 7 H6 Z" fill="#222"/></svg>
<div class="a " style="left:510.6px;top:44px;width:0.7px;height:17px;background:#a4a29c;"></div>
<div class="a " style="left:511.3px;top:44px;width:0.7px;height:17px;background:#f6f5f2;"></div>
<svg class="a" style="left:515.4px;top:46.4px" width="9" height="10.6" viewBox="0 0 9 10.6"><path d="M1.4 .6 V9.6 M1.4 1 H8.6 M2 1.6 L8 8.4" stroke="#333" stroke-width="0.79" fill="none"/><circle cx="1.4" cy="1" r="1" fill="#222"/></svg>
<svg class="a" style="left:533px;top:46.4px" width="9.8" height="10.6" viewBox="0 0 9.8 10.6"><path d="M8.4 .6 V9.6 M1 1 H8.4 M7.8 1.6 L1.4 8.4" stroke="#333" stroke-width="0.79" fill="none"/></svg>
<svg class="a" style="left:550.6px;top:46.4px" width="9.8" height="10.6" viewBox="0 0 9.8 10.6"><path d="M8.4 .6 V9.6 M1 9.4 H8.4 M7.8 8.8 L1.4 1.6" stroke="#333" stroke-width="0.79" fill="none"/><circle cx="8.4" cy="9.4" r=".9" fill="#222"/></svg>
<svg class="a" style="left:568.2px;top:46.4px" width="9.4" height="10.6" viewBox="0 0 9.4 10.6"><path d="M1.2 .6 V9.6 M1.2 9.4 H9 M1.8 8.8 L8.4 1.6" stroke="#333" stroke-width="0.79" fill="none"/></svg>
<svg class="a" style="left:585.6px;top:46.4px" width="9" height="10.6" viewBox="0 0 9 10.6"><path d="M.8 1 H8.2 V9.2 H.8 Z" stroke="#333" stroke-width="0.79" fill="none"/><rect x="3.8" y="4.2" width="1.8" height="1.8" fill="#222"/></svg>
<div class="a " style="left:600.4px;top:44px;width:0.7px;height:17px;background:#a4a29c;"></div>
<div class="a " style="left:601.1px;top:44px;width:0.7px;height:17px;background:#f6f5f2;"></div>
<svg class="a" style="left:605.4px;top:46.4px" width="9.8" height="10.6" viewBox="0 0 9.8 10.6"><path d="M1 1.6 V9 M1 5.3 H9.6" stroke="#333" stroke-width="0.88" fill="none"/></svg>
<svg class="a" style="left:622.6px;top:46.4px" width="10.6" height="10.6" viewBox="0 0 10.6 10.6"><path d="M9.8 1.6 V9 M9.8 5.3 H.6" stroke="#333" stroke-width="0.88" fill="none"/></svg>
<svg class="a" style="left:641.4px;top:46.4px" width="8.8" height="10.6" viewBox="0 0 8.8 10.6"><path d="M.4 1.2 H8.4 M4.4 1.2 V10" stroke="#333" stroke-width="0.88" fill="none"/></svg>
<svg class="a" style="left:657.2px;top:46.4px" width="10.4" height="10.6" viewBox="0 0 10.4 10.6"><path d="M.4 9.8 H10 M5.2 9.8 V1" stroke="#333" stroke-width="0.88" fill="none"/></svg>
<div class="a " style="left:670.6px;top:44px;width:0.7px;height:17px;background:#a4a29c;"></div>
<div class="a " style="left:671.3px;top:44px;width:0.7px;height:17px;background:#f6f5f2;"></div>
<div class="a fld" style="left:673px;top:47px;width:39.4px;height:10.6px;background:#d4d0c8;"></div>
<div class="a btn" style="left:703.6px;top:48.2px;width:8px;height:8.6px;"></div>
<svg class="a" style="left:705.6px;top:51.4px" width="4" height="2.4" viewBox="0 0 4 2.4"><polygon points="0,0 4,0 2,2.4" fill="#8a8780"/></svg>
<div class="a btn" style="left:716px;top:46px;width:32.2px;height:13px;"></div>
<span class="a t " style="left:725.1px;top:47.7px;font-size:7.2px;line-height:9.2px;color:#8a8780;transform:scaleX(0.892);text-shadow:.6px .6px 0 #fff;">Авто</span>
<div class="a btn" style="left:749px;top:46px;width:32.4px;height:13px;"></div>
<span class="a t " style="left:753.2px;top:47.7px;font-size:7.2px;line-height:9.2px;color:#8a8780;transform:scaleX(0.767);text-shadow:.6px .6px 0 #fff;">В... / Из...</span>
<div class="a btn" style="left:782.4px;top:46px;width:32.4px;height:13px;"></div>
<span class="a t " style="left:784.6px;top:47.7px;font-size:7.2px;line-height:9.2px;color:#8a8780;transform:scaleX(0.868);text-shadow:.6px .6px 0 #fff;">Проверка</span>
<div class="a btn" style="left:815.8px;top:46px;width:32.6px;height:13px;"></div>
<span class="a t " style="left:818.3px;top:47.7px;font-size:7.2px;line-height:9.2px;color:#8a8780;transform:scaleX(0.886);text-shadow:.6px .6px 0 #fff;">Рисовать</span>
<div class="a " style="left:21px;top:63px;width:642.6px;height:9.4px;background:#fff;"></div>
<div class="a " style="left:21px;top:72.4px;width:10px;height:432.2px;background:#fff;"></div>
<div class="a " style="left:32px;top:73px;width:622.4px;height:422.4px;background:#fff;"></div>
<svg class="a" style="left:0px;top:0px" width="850" height="536" viewBox="0 0 850 536"><line x1="43.4" y1="73" x2="43.4" y2="495.4" stroke="#b4b4b4" stroke-width="0.8"/><line x1="76.64" y1="73" x2="76.64" y2="495.4" stroke="#8e8e8e" stroke-width="0.9"/><line x1="109.88" y1="73" x2="109.88" y2="495.4" stroke="#b4b4b4" stroke-width="0.8"/><line x1="143.12" y1="73" x2="143.12" y2="495.4" stroke="#8e8e8e" stroke-width="0.9"/><line x1="176.36" y1="73" x2="176.36" y2="495.4" stroke="#b4b4b4" stroke-width="0.8"/><line x1="209.6" y1="73" x2="209.6" y2="495.4" stroke="#8e8e8e" stroke-width="0.9"/><line x1="242.84" y1="73" x2="242.84" y2="495.4" stroke="#b4b4b4" stroke-width="0.8"/><line x1="276.08" y1="73" x2="276.08" y2="495.4" stroke="#8e8e8e" stroke-width="0.9"/><line x1="309.32" y1="73" x2="309.32" y2="495.4" stroke="#b4b4b4" stroke-width="0.8"/><line x1="342.56" y1="73" x2="342.56" y2="495.4" stroke="#8e8e8e" stroke-width="0.9"/><line x1="375.8" y1="73" x2="375.8" y2="495.4" stroke="#b4b4b4" stroke-width="0.8"/><line x1="409.04" y1="73" x2="409.04" y2="495.4" stroke="#8e8e8e" stroke-width="0.9"/><line x1="442.28" y1="73" x2="442.28" y2="495.4" stroke="#b4b4b4" stroke-width="0.8"/><line x1="475.52" y1="73" x2="475.52" y2="495.4" stroke="#8e8e8e" stroke-width="0.9"/><line x1="508.76" y1="73" x2="508.76" y2="495.4" stroke="#b4b4b4" stroke-width="0.8"/><line x1="542" y1="73" x2="542" y2="495.4" stroke="#8e8e8e" stroke-width="0.9"/><line x1="575.24" y1="73" x2="575.24" y2="495.4" stroke="#b4b4b4" stroke-width="0.8"/><line x1="608.48" y1="73" x2="608.48" y2="495.4" stroke="#8e8e8e" stroke-width="0.9"/><line x1="641.72" y1="73" x2="641.72" y2="495.4" stroke="#b4b4b4" stroke-width="0.8"/><line x1="32" y1="84.7" x2="654.4" y2="84.7" stroke="#8e8e8e" stroke-width="0.9"/><line x1="32" y1="118" x2="654.4" y2="118" stroke="#b4b4b4" stroke-width="0.8"/><line x1="32" y1="151.3" x2="654.4" y2="151.3" stroke="#8e8e8e" stroke-width="0.9"/><line x1="32" y1="184.6" x2="654.4" y2="184.6" stroke="#b4b4b4" stroke-width="0.8"/><line x1="32" y1="217.9" x2="654.4" y2="217.9" stroke="#8e8e8e" stroke-width="0.9"/><line x1="32" y1="251.2" x2="654.4" y2="251.2" stroke="#b4b4b4" stroke-width="0.8"/><line x1="32" y1="284.5" x2="654.4" y2="284.5" stroke="#8e8e8e" stroke-width="0.9"/><line x1="32" y1="317.8" x2="654.4" y2="317.8" stroke="#b4b4b4" stroke-width="0.8"/><line x1="32" y1="351.1" x2="654.4" y2="351.1" stroke="#8e8e8e" stroke-width="0.9"/><line x1="32" y1="384.4" x2="654.4" y2="384.4" stroke="#b4b4b4" stroke-width="0.8"/><line x1="32" y1="417.7" x2="654.4" y2="417.7" stroke="#8e8e8e" stroke-width="0.9"/><line x1="32" y1="451" x2="654.4" y2="451" stroke="#b4b4b4" stroke-width="0.8"/><line x1="32" y1="484.3" x2="654.4" y2="484.3" stroke="#8e8e8e" stroke-width="0.9"/><line x1="36.74" y1="70.2" x2="36.74" y2="72.2" stroke="#1a1a1a" stroke-width="0.85"/><line x1="43.39" y1="68.6" x2="43.39" y2="72.2" stroke="#1a1a1a" stroke-width="0.85"/><line x1="50.04" y1="70.2" x2="50.04" y2="72.2" stroke="#1a1a1a" stroke-width="0.85"/><line x1="56.69" y1="70.2" x2="56.69" y2="72.2" stroke="#1a1a1a" stroke-width="0.85"/><line x1="63.34" y1="70.2" x2="63.34" y2="72.2" stroke="#1a1a1a" stroke-width="0.85"/><line x1="69.99" y1="70.2" x2="69.99" y2="72.2" stroke="#1a1a1a" stroke-width="0.85"/><line x1="76.64" y1="62.2" x2="76.64" y2="72.2" stroke="#1a1a1a" stroke-width="0.85"/><line x1="83.29" y1="70.2" x2="83.29" y2="72.2" stroke="#1a1a1a" stroke-width="0.85"/><line x1="89.94" y1="70.2" x2="89.94" y2="72.2" stroke="#1a1a1a" stroke-width="0.85"/><line x1="96.59" y1="70.2" x2="96.59" y2="72.2" stroke="#1a1a1a" stroke-width="0.85"/><line x1="103.24" y1="70.2" x2="103.24" y2="72.2" stroke="#1a1a1a" stroke-width="0.85"/><line x1="109.89" y1="68.6" x2="109.89" y2="72.2" stroke="#1a1a1a" stroke-width="0.85"/><line x1="116.54" y1="70.2" x2="116.54" y2="72.2" stroke="#1a1a1a" stroke-width="0.85"/><line x1="123.19" y1="70.2" x2="123.19" y2="72.2" stroke="#1a1a1a" stroke-width="0.85"/><line x1="129.84" y1="70.2" x2="129.84" y2="72.2" stroke="#1a1a1a" stroke-width="0.85"/><line x1="136.49" y1="70.2" x2="136.49" y2="72.2" stroke="#1a1a1a" stroke-width="0.85"/><line x1="143.14" y1="62.2" x2="143.14" y2="72.2" stroke="#1a1a1a" stroke-width="0.85"/><line x1="149.79" y1="70.2" x2="149.79" y2="72.2" stroke="#1a1a1a" stroke-width="0.85"/><line x1="156.44" y1="70.2" x2="156.44" y2="72.2" stroke="#1a1a1a" stroke-width="0.85"/><line x1="163.09" y1="70.2" x2="163.09" y2="72.2" stroke="#1a1a1a" stroke-width="0.85"/><line x1="169.74" y1="70.2" x2="169.74" y2="72.2" stroke="#1a1a1a" stroke-width="0.85"/><line x1="176.39" y1="68.6" x2="176.39" y2="72.2" stroke="#1a1a1a" stroke-width="0.85"/><line x1="183.04" y1="70.2" x2="183.04" y2="72.2" stroke="#1a1a1a" stroke-width="0.85"/><line x1="189.69" y1="70.2" x2="189.69" y2="72.2" stroke="#1a1a1a" stroke-width="0.85"/><line x1="196.34" y1="70.2" x2="196.34" y2="72.2" stroke="#1a1a1a" stroke-width="0.85"/><line x1="202.99" y1="70.2" x2="202.99" y2="72.2" stroke="#1a1a1a" stroke-width="0.85"/><line x1="209.64" y1="62.2" x2="209.64" y2="72.2" stroke="#1a1a1a" stroke-width="0.85"/><line x1="216.29" y1="70.2" x2="216.29" y2="72.2" stroke="#1a1a1a" stroke-width="0.85"/><line x1="222.94" y1="70.2" x2="222.94" y2="72.2" stroke="#1a1a1a" stroke-width="0.85"/><line x1="229.59" y1="70.2" x2="229.59" y2="72.2" stroke="#1a1a1a" stroke-width="0.85"/><line x1="236.24" y1="70.2" x2="236.24" y2="72.2" stroke="#1a1a1a" stroke-width="0.85"/><line x1="242.89" y1="68.6" x2="242.89" y2="72.2" stroke="#1a1a1a" stroke-width="0.85"/><line x1="249.54" y1="70.2" x2="249.54" y2="72.2" stroke="#1a1a1a" stroke-width="0.85"/><line x1="256.19" y1="70.2" x2="256.19" y2="72.2" stroke="#1a1a1a" stroke-width="0.85"/><line x1="262.84" y1="70.2" x2="262.84" y2="72.2" stroke="#1a1a1a" stroke-width="0.85"/><line x1="269.49" y1="70.2" x2="269.49" y2="72.2" stroke="#1a1a1a" stroke-width="0.85"/><line x1="276.14" y1="62.2" x2="276.14" y2="72.2" stroke="#1a1a1a" stroke-width="0.85"/><line x1="282.79" y1="70.2" x2="282.79" y2="72.2" stroke="#1a1a1a" stroke-width="0.85"/><line x1="289.44" y1="70.2" x2="289.44" y2="72.2" stroke="#1a1a1a" stroke-width="0.85"/><line x1="296.09" y1="70.2" x2="296.09" y2="72.2" stroke="#1a1a1a" stroke-width="0.85"/><line x1="302.74" y1="70.2" x2="302.74" y2="72.2" stroke="#1a1a1a" stroke-width="0.85"/><line x1="309.39" y1="68.6" x2="309.39" y2="72.2" stroke="#1a1a1a" stroke-width="0.85"/><line x1="316.04" y1="70.2" x2="316.04" y2="72.2" stroke="#1a1a1a" stroke-width="0.85"/><line x1="322.69" y1="70.2" x2="322.69" y2="72.2" stroke="#1a1a1a" stroke-width="0.85"/><line x1="329.34" y1="70.2" x2="329.34" y2="72.2" stroke="#1a1a1a" stroke-width="0.85"/><line x1="335.99" y1="70.2" x2="335.99" y2="72.2" stroke="#1a1a1a" stroke-width="0.85"/><line x1="342.64" y1="62.2" x2="342.64" y2="72.2" stroke="#1a1a1a" stroke-width="0.85"/><line x1="349.29" y1="70.2" x2="349.29" y2="72.2" stroke="#1a1a1a" stroke-width="0.85"/><line x1="355.94" y1="70.2" x2="355.94" y2="72.2" stroke="#1a1a1a" stroke-width="0.85"/><line x1="362.59" y1="70.2" x2="362.59" y2="72.2" stroke="#1a1a1a" stroke-width="0.85"/><line x1="369.24" y1="70.2" x2="369.24" y2="72.2" stroke="#1a1a1a" stroke-width="0.85"/><line x1="375.89" y1="68.6" x2="375.89" y2="72.2" stroke="#1a1a1a" stroke-width="0.85"/><line x1="382.54" y1="70.2" x2="382.54" y2="72.2" stroke="#1a1a1a" stroke-width="0.85"/><line x1="389.19" y1="70.2" x2="389.19" y2="72.2" stroke="#1a1a1a" stroke-width="0.85"/><line x1="395.84" y1="70.2" x2="395.84" y2="72.2" stroke="#1a1a1a" stroke-width="0.85"/><line x1="402.49" y1="70.2" x2="402.49" y2="72.2" stroke="#1a1a1a" stroke-width="0.85"/><line x1="409.14" y1="62.2" x2="409.14" y2="72.2" stroke="#1a1a1a" stroke-width="0.85"/><line x1="415.79" y1="70.2" x2="415.79" y2="72.2" stroke="#1a1a1a" stroke-width="0.85"/><line x1="422.44" y1="70.2" x2="422.44" y2="72.2" stroke="#1a1a1a" stroke-width="0.85"/><line x1="429.09" y1="70.2" x2="429.09" y2="72.2" stroke="#1a1a1a" stroke-width="0.85"/><line x1="435.74" y1="70.2" x2="435.74" y2="72.2" stroke="#1a1a1a" stroke-width="0.85"/><line x1="442.39" y1="68.6" x2="442.39" y2="72.2" stroke="#1a1a1a" stroke-width="0.85"/><line x1="449.04" y1="70.2" x2="449.04" y2="72.2" stroke="#1a1a1a" stroke-width="0.85"/><line x1="455.69" y1="70.2" x2="455.69" y2="72.2" stroke="#1a1a1a" stroke-width="0.85"/><line x1="462.34" y1="70.2" x2="462.34" y2="72.2" stroke="#1a1a1a" stroke-width="0.85"/><line x1="468.99" y1="70.2" x2="468.99" y2="72.2" stroke="#1a1a1a" stroke-width="0.85"/><line x1="475.64" y1="62.2" x2="475.64" y2="72.2" stroke="#1a1a1a" stroke-width="0.85"/><line x1="482.29" y1="70.2" x2="482.29" y2="72.2" stroke="#1a1a1a" stroke-width="0.85"/><line x1="488.94" y1="70.2" x2="488.94" y2="72.2" stroke="#1a1a1a" stroke-width="0.85"/><line x1="495.59" y1="70.2" x2="495.59" y2="72.2" stroke="#1a1a1a" stroke-width="0.85"/><line x1="502.24" y1="70.2" x2="502.24" y2="72.2" stroke="#1a1a1a" stroke-width="0.85"/><line x1="508.89" y1="68.6" x2="508.89" y2="72.2" stroke="#1a1a1a" stroke-width="0.85"/><line x1="515.54" y1="70.2" x2="515.54" y2="72.2" stroke="#1a1a1a" stroke-width="0.85"/><line x1="522.19" y1="70.2" x2="522.19" y2="72.2" stroke="#1a1a1a" stroke-width="0.85"/><line x1="528.84" y1="70.2" x2="528.84" y2="72.2" stroke="#1a1a1a" stroke-width="0.85"/><line x1="535.49" y1="70.2" x2="535.49" y2="72.2" stroke="#1a1a1a" stroke-width="0.85"/><line x1="542.14" y1="62.2" x2="542.14" y2="72.2" stroke="#1a1a1a" stroke-width="0.85"/><line x1="548.79" y1="70.2" x2="548.79" y2="72.2" stroke="#1a1a1a" stroke-width="0.85"/><line x1="555.44" y1="70.2" x2="555.44" y2="72.2" stroke="#1a1a1a" stroke-width="0.85"/><line x1="562.09" y1="70.2" x2="562.09" y2="72.2" stroke="#1a1a1a" stroke-width="0.85"/><line x1="568.74" y1="70.2" x2="568.74" y2="72.2" stroke="#1a1a1a" stroke-width="0.85"/><line x1="575.39" y1="68.6" x2="575.39" y2="72.2" stroke="#1a1a1a" stroke-width="0.85"/><line x1="582.04" y1="70.2" x2="582.04" y2="72.2" stroke="#1a1a1a" stroke-width="0.85"/><line x1="588.69" y1="70.2" x2="588.69" y2="72.2" stroke="#1a1a1a" stroke-width="0.85"/><line x1="595.34" y1="70.2" x2="595.34" y2="72.2" stroke="#1a1a1a" stroke-width="0.85"/><line x1="601.99" y1="70.2" x2="601.99" y2="72.2" stroke="#1a1a1a" stroke-width="0.85"/><line x1="608.64" y1="62.2" x2="608.64" y2="72.2" stroke="#1a1a1a" stroke-width="0.85"/><line x1="615.29" y1="70.2" x2="615.29" y2="72.2" stroke="#1a1a1a" stroke-width="0.85"/><line x1="621.94" y1="70.2" x2="621.94" y2="72.2" stroke="#1a1a1a" stroke-width="0.85"/><line x1="628.59" y1="70.2" x2="628.59" y2="72.2" stroke="#1a1a1a" stroke-width="0.85"/><line x1="635.24" y1="70.2" x2="635.24" y2="72.2" stroke="#1a1a1a" stroke-width="0.85"/><line x1="641.89" y1="68.6" x2="641.89" y2="72.2" stroke="#1a1a1a" stroke-width="0.85"/><line x1="648.54" y1="70.2" x2="648.54" y2="72.2" stroke="#1a1a1a" stroke-width="0.85"/><line x1="655.19" y1="70.2" x2="655.19" y2="72.2" stroke="#1a1a1a" stroke-width="0.85"/><line x1="661.84" y1="70.2" x2="661.84" y2="72.2" stroke="#1a1a1a" stroke-width="0.85"/><line x1="29.2" y1="78.04" x2="31.2" y2="78.04" stroke="#1a1a1a" stroke-width="0.85"/><line x1="21.2" y1="84.7" x2="31.2" y2="84.7" stroke="#1a1a1a" stroke-width="0.85"/><line x1="29.2" y1="91.36" x2="31.2" y2="91.36" stroke="#1a1a1a" stroke-width="0.85"/><line x1="29.2" y1="98.02" x2="31.2" y2="98.02" stroke="#1a1a1a" stroke-width="0.85"/><line x1="29.2" y1="104.68" x2="31.2" y2="104.68" stroke="#1a1a1a" stroke-width="0.85"/><line x1="29.2" y1="111.34" x2="31.2" y2="111.34" stroke="#1a1a1a" stroke-width="0.85"/><line x1="27.6" y1="118" x2="31.2" y2="118" stroke="#1a1a1a" stroke-width="0.85"/><line x1="29.2" y1="124.66" x2="31.2" y2="124.66" stroke="#1a1a1a" stroke-width="0.85"/><line x1="29.2" y1="131.32" x2="31.2" y2="131.32" stroke="#1a1a1a" stroke-width="0.85"/><line x1="29.2" y1="137.98" x2="31.2" y2="137.98" stroke="#1a1a1a" stroke-width="0.85"/><line x1="29.2" y1="144.64" x2="31.2" y2="144.64" stroke="#1a1a1a" stroke-width="0.85"/><line x1="21.2" y1="151.3" x2="31.2" y2="151.3" stroke="#1a1a1a" stroke-width="0.85"/><line x1="29.2" y1="157.96" x2="31.2" y2="157.96" stroke="#1a1a1a" stroke-width="0.85"/><line x1="29.2" y1="164.62" x2="31.2" y2="164.62" stroke="#1a1a1a" stroke-width="0.85"/><line x1="29.2" y1="171.28" x2="31.2" y2="171.28" stroke="#1a1a1a" stroke-width="0.85"/><line x1="29.2" y1="177.94" x2="31.2" y2="177.94" stroke="#1a1a1a" stroke-width="0.85"/><line x1="27.6" y1="184.6" x2="31.2" y2="184.6" stroke="#1a1a1a" stroke-width="0.85"/><line x1="29.2" y1="191.26" x2="31.2" y2="191.26" stroke="#1a1a1a" stroke-width="0.85"/><line x1="29.2" y1="197.92" x2="31.2" y2="197.92" stroke="#1a1a1a" stroke-width="0.85"/><line x1="29.2" y1="204.58" x2="31.2" y2="204.58" stroke="#1a1a1a" stroke-width="0.85"/><line x1="29.2" y1="211.24" x2="31.2" y2="211.24" stroke="#1a1a1a" stroke-width="0.85"/><line x1="21.2" y1="217.9" x2="31.2" y2="217.9" stroke="#1a1a1a" stroke-width="0.85"/><line x1="29.2" y1="224.56" x2="31.2" y2="224.56" stroke="#1a1a1a" stroke-width="0.85"/><line x1="29.2" y1="231.22" x2="31.2" y2="231.22" stroke="#1a1a1a" stroke-width="0.85"/><line x1="29.2" y1="237.88" x2="31.2" y2="237.88" stroke="#1a1a1a" stroke-width="0.85"/><line x1="29.2" y1="244.54" x2="31.2" y2="244.54" stroke="#1a1a1a" stroke-width="0.85"/><line x1="27.6" y1="251.2" x2="31.2" y2="251.2" stroke="#1a1a1a" stroke-width="0.85"/><line x1="29.2" y1="257.86" x2="31.2" y2="257.86" stroke="#1a1a1a" stroke-width="0.85"/><line x1="29.2" y1="264.52" x2="31.2" y2="264.52" stroke="#1a1a1a" stroke-width="0.85"/><line x1="29.2" y1="271.18" x2="31.2" y2="271.18" stroke="#1a1a1a" stroke-width="0.85"/><line x1="29.2" y1="277.84" x2="31.2" y2="277.84" stroke="#1a1a1a" stroke-width="0.85"/><line x1="21.2" y1="284.5" x2="31.2" y2="284.5" stroke="#1a1a1a" stroke-width="0.85"/><line x1="29.2" y1="291.16" x2="31.2" y2="291.16" stroke="#1a1a1a" stroke-width="0.85"/><line x1="29.2" y1="297.82" x2="31.2" y2="297.82" stroke="#1a1a1a" stroke-width="0.85"/><line x1="29.2" y1="304.48" x2="31.2" y2="304.48" stroke="#1a1a1a" stroke-width="0.85"/><line x1="29.2" y1="311.14" x2="31.2" y2="311.14" stroke="#1a1a1a" stroke-width="0.85"/><line x1="27.6" y1="317.8" x2="31.2" y2="317.8" stroke="#1a1a1a" stroke-width="0.85"/><line x1="29.2" y1="324.46" x2="31.2" y2="324.46" stroke="#1a1a1a" stroke-width="0.85"/><line x1="29.2" y1="331.12" x2="31.2" y2="331.12" stroke="#1a1a1a" stroke-width="0.85"/><line x1="29.2" y1="337.78" x2="31.2" y2="337.78" stroke="#1a1a1a" stroke-width="0.85"/><line x1="29.2" y1="344.44" x2="31.2" y2="344.44" stroke="#1a1a1a" stroke-width="0.85"/><line x1="21.2" y1="351.1" x2="31.2" y2="351.1" stroke="#1a1a1a" stroke-width="0.85"/><line x1="29.2" y1="357.76" x2="31.2" y2="357.76" stroke="#1a1a1a" stroke-width="0.85"/><line x1="29.2" y1="364.42" x2="31.2" y2="364.42" stroke="#1a1a1a" stroke-width="0.85"/><line x1="29.2" y1="371.08" x2="31.2" y2="371.08" stroke="#1a1a1a" stroke-width="0.85"/><line x1="29.2" y1="377.74" x2="31.2" y2="377.74" stroke="#1a1a1a" stroke-width="0.85"/><line x1="27.6" y1="384.4" x2="31.2" y2="384.4" stroke="#1a1a1a" stroke-width="0.85"/><line x1="29.2" y1="391.06" x2="31.2" y2="391.06" stroke="#1a1a1a" stroke-width="0.85"/><line x1="29.2" y1="397.72" x2="31.2" y2="397.72" stroke="#1a1a1a" stroke-width="0.85"/><line x1="29.2" y1="404.38" x2="31.2" y2="404.38" stroke="#1a1a1a" stroke-width="0.85"/><line x1="29.2" y1="411.04" x2="31.2" y2="411.04" stroke="#1a1a1a" stroke-width="0.85"/><line x1="21.2" y1="417.7" x2="31.2" y2="417.7" stroke="#1a1a1a" stroke-width="0.85"/><line x1="29.2" y1="424.36" x2="31.2" y2="424.36" stroke="#1a1a1a" stroke-width="0.85"/><line x1="29.2" y1="431.02" x2="31.2" y2="431.02" stroke="#1a1a1a" stroke-width="0.85"/><line x1="29.2" y1="437.68" x2="31.2" y2="437.68" stroke="#1a1a1a" stroke-width="0.85"/><line x1="29.2" y1="444.34" x2="31.2" y2="444.34" stroke="#1a1a1a" stroke-width="0.85"/><line x1="27.6" y1="451" x2="31.2" y2="451" stroke="#1a1a1a" stroke-width="0.85"/><line x1="29.2" y1="457.66" x2="31.2" y2="457.66" stroke="#1a1a1a" stroke-width="0.85"/><line x1="29.2" y1="464.32" x2="31.2" y2="464.32" stroke="#1a1a1a" stroke-width="0.85"/><line x1="29.2" y1="470.98" x2="31.2" y2="470.98" stroke="#1a1a1a" stroke-width="0.85"/><line x1="29.2" y1="477.64" x2="31.2" y2="477.64" stroke="#1a1a1a" stroke-width="0.85"/><line x1="21.2" y1="484.3" x2="31.2" y2="484.3" stroke="#1a1a1a" stroke-width="0.85"/><line x1="29.2" y1="490.96" x2="31.2" y2="490.96" stroke="#1a1a1a" stroke-width="0.85"/><line x1="29.2" y1="497.62" x2="31.2" y2="497.62" stroke="#1a1a1a" stroke-width="0.85"/></svg>
<span class="a t " style="left:52.07px;top:61.15px;font-size:8.1px;line-height:10.1px;color:#222;font-weight:bold;">1000.0</span>
<span class="a t " style="left:123.07px;top:61.15px;font-size:8.1px;line-height:10.1px;color:#222;font-weight:bold;">900.0</span>
<span class="a t " style="left:189.57px;top:61.15px;font-size:8.1px;line-height:10.1px;color:#222;font-weight:bold;">800.0</span>
<span class="a t " style="left:256.07px;top:61.15px;font-size:8.1px;line-height:10.1px;color:#222;font-weight:bold;">700.0</span>
<span class="a t " style="left:322.57px;top:61.15px;font-size:8.1px;line-height:10.1px;color:#222;font-weight:bold;">600.0</span>
<span class="a t " style="left:389.07px;top:61.15px;font-size:8.1px;line-height:10.1px;color:#222;font-weight:bold;">500.0</span>
<span class="a t " style="left:455.57px;top:61.15px;font-size:8.1px;line-height:10.1px;color:#222;font-weight:bold;">400.0</span>
<span class="a t " style="left:522.07px;top:61.15px;font-size:8.1px;line-height:10.1px;color:#222;font-weight:bold;">300.0</span>
<span class="a t " style="left:588.57px;top:61.15px;font-size:8.1px;line-height:10.1px;color:#222;font-weight:bold;">200.0</span>
<div class="a" style="left:20.6px;top:73.4px;width:10px;height:431px;overflow:hidden">
<span class="a t" style="left:0px;top:10.9px;font-size:8.1px;line-height:9px;font-weight:bold;color:#222;transform-origin:0 0;transform:rotate(-90deg);">100.0</span>
<span class="a t" style="left:0px;top:77.5px;font-size:8.1px;line-height:9px;font-weight:bold;color:#222;transform-origin:0 0;transform:rotate(-90deg);">200.0</span>
<span class="a t" style="left:0px;top:144.1px;font-size:8.1px;line-height:9px;font-weight:bold;color:#222;transform-origin:0 0;transform:rotate(-90deg);">300.0</span>
<span class="a t" style="left:0px;top:210.7px;font-size:8.1px;line-height:9px;font-weight:bold;color:#222;transform-origin:0 0;transform:rotate(-90deg);">400.0</span>
<span class="a t" style="left:0px;top:277.3px;font-size:8.1px;line-height:9px;font-weight:bold;color:#222;transform-origin:0 0;transform:rotate(-90deg);">500.0</span>
<span class="a t" style="left:0px;top:343.9px;font-size:8.1px;line-height:9px;font-weight:bold;color:#222;transform-origin:0 0;transform:rotate(-90deg);">600.0</span>
<span class="a t" style="left:0px;top:410.5px;font-size:8.1px;line-height:9px;font-weight:bold;color:#222;transform-origin:0 0;transform:rotate(-90deg);">700.0</span>
</div>
<svg class="a" style="left:0px;top:0px" width="850" height="536" viewBox="0 0 850 536"><rect x="20" y="62" width="643.6" height="1" fill="#8a8884"/><rect x="20" y="62" width="1" height="443" fill="#8a8884"/><rect x="31" y="63" width=".8" height="9" fill="#3a3a3a"/><rect x="21" y="72" width="10" height=".9" fill="#3a3a3a"/><rect x="31" y="72" width="632.4" height="1.5" fill="#181818"/><rect x="31" y="72" width="1.15" height="424" fill="#181818"/><rect x="31" y="495" width="624" height=".9" fill="#3a3a3a"/><rect x="653.9" y="73" width=".8" height="423" fill="#555"/></svg>
<div class="a " style="left:654.9px;top:73.4px;width:8.7px;height:422px;background:#eceae6;"></div>
<div class="a btn" style="left:654.9px;top:81.5px;width:8.7px;height:165.1px;background:#e8e6e2;border-right-color:#d0cec8;border-bottom:1.2px solid #6e6c68;box-shadow:none;"></div>
<div class="a btn" style="left:654.9px;top:73.6px;width:8.7px;height:8.2px;"></div>
<svg class="a" style="left:654.9px;top:73.4px" width="8.7" height="8.2" viewBox="0 0 8.7 8.2"><polygon points="2.2,5.4 6.4,5.4 4.3,2.8" fill="#000"/></svg>
<div class="a btn" style="left:654.9px;top:486.4px;width:8.7px;height:8.8px;"></div>
<svg class="a" style="left:654.9px;top:486.4px" width="8.7" height="8.8" viewBox="0 0 8.7 8.8"><polygon points="2.2,3.2 6.4,3.2 4.3,5.8" fill="#000"/></svg>
<div class="a " style="left:31.6px;top:496px;width:623.3px;height:9.8px;background:#eceae6;"></div>
<div class="a btn" style="left:40.6px;top:496px;width:395px;height:8.8px;background:#e8e6e2;border-right:1.2px solid #6e6c68;border-bottom-color:#dcdad5;box-shadow:none;"></div>
<div class="a btn" style="left:31.6px;top:496px;width:9px;height:8.6px;"></div>
<svg class="a" style="left:31.6px;top:496px" width="9" height="8.6" viewBox="0 0 9 8.6"><polygon points="5.6,2.2 5.6,6.4 3,4.3" fill="#000"/></svg>
<div class="a btn" style="left:646.4px;top:496px;width:8.5px;height:8.6px;"></div>
<svg class="a" style="left:646.4px;top:496px" width="8.5" height="8.6" viewBox="0 0 8.5 8.6"><polygon points="3.2,2.2 3.2,6.4 5.8,4.3" fill="#000"/></svg>
<div class="a " style="left:654.9px;top:496px;width:8.7px;height:8.6px;background:#d4d0c8;"></div>
<svg class="a" style="left:4.2px;top:63.4px" width="15" height="2" viewBox="0 0 15 2"><rect x="0" y="0" width=".8" height="1" fill="#fff"/><rect x="0.6" y=".6" width=".7" height=".8" fill="#8c8a84"/><rect x="1.6" y="0" width=".8" height="1" fill="#fff"/><rect x="2.2" y=".6" width=".7" height=".8" fill="#8c8a84"/><rect x="3.2" y="0" width=".8" height="1" fill="#fff"/><rect x="3.8" y=".6" width=".7" height=".8" fill="#8c8a84"/><rect x="4.8" y="0" width=".8" height="1" fill="#fff"/><rect x="5.4" y=".6" width=".7" height=".8" fill="#8c8a84"/><rect x="6.4" y="0" width=".8" height="1" fill="#fff"/><rect x="7" y=".6" width=".7" height=".8" fill="#8c8a84"/><rect x="8" y="0" width=".8" height="1" fill="#fff"/><rect x="8.6" y=".6" width=".7" height=".8" fill="#8c8a84"/><rect x="9.6" y="0" width=".8" height="1" fill="#fff"/><rect x="10.2" y=".6" width=".7" height=".8" fill="#8c8a84"/><rect x="11.2" y="0" width=".8" height="1" fill="#fff"/><rect x="11.8" y=".6" width=".7" height=".8" fill="#8c8a84"/><rect x="12.8" y="0" width=".8" height="1" fill="#fff"/><rect x="13.4" y=".6" width=".7" height=".8" fill="#8c8a84"/></svg>
<div class="a " style="left:3.8px;top:67.2px;width:14.8px;height:15.4px;background:#dddad3;border-top:.8px solid #6e6c68;border-left:.8px solid #6e6c68;border-right:.7px solid #fff;border-bottom:.7px solid #fff;"></div>
<svg class="a" style="left:6.8px;top:68.6px" width="10.4" height="12.4" viewBox="0 0 10.4 12.4"><path d="M.8 .8 L.8 9.4 L3.2 7.4 L5.4 11.6 L7.2 10.8 L5.2 6.8 L9 6.6 Z" fill="#d8f0d4" stroke="#3aa848" stroke-width=".9" stroke-linejoin="round"/></svg>
<svg class="a" style="left:5px;top:85.4px" width="12" height="13.4" viewBox="0 0 12 13.4"><path d="M.4 3 Q5 .6 11.4 1.6" stroke="#444" stroke-width=".7" fill="none"/><path d="M3.8 2.6 L4.2 12.4 L11.2 8 Z" fill="#dfe3f4" stroke="#333" stroke-width=".9" stroke-linejoin="round"/><rect x="3" y="1" width="2" height="2" fill="#3858d8"/></svg>
<div class="a " style="left:4.4px;top:102.2px;width:14px;height:0.7px;background:#a8a59e;"></div>
<svg class="a" style="left:5.4px;top:106px" width="11.4" height="11.4" viewBox="0 0 11.4 11.4"><path d="M1.2 10.2 L10.2 1.2" stroke="#333" stroke-width=".9"/><rect x="0.3" y="9.3" width="1.8" height="1.8" fill="#20a0e0"/><rect x="9.3" y="0.3" width="1.8" height="1.8" fill="#20a0e0"/></svg>
<svg class="a" style="left:5.4px;top:123.4px" width="11.4" height="12.6" viewBox="0 0 11.4 12.6"><path d="M1.2 11.4 L10.2 1.2" stroke="#333" stroke-width=".9"/><rect x="0.3" y="10.5" width="1.8" height="1.8" fill="#20a0e0"/><rect x="9.3" y="0.3" width="1.8" height="1.8" fill="#20a0e0"/><rect x="4.8" y="5.4" width="1.8" height="1.8" fill="#20a0e0"/></svg>
<svg class="a" style="left:5.4px;top:141px" width="11.8" height="11.4" viewBox="0 0 11.8 11.4"><path d="M1 1.6 Q6 3 10.6 10.2 M1.4 9.8 L9.4 2.8" stroke="#333" stroke-width=".9" fill="none"/><rect x="0.1" y="0.7" width="1.8" height="1.8" fill="#20a0e0"/><rect x="9.7" y="9.3" width="1.8" height="1.8" fill="#20a0e0"/><rect x="0.5" y="8.9" width="1.8" height="1.8" fill="#20a0e0"/><rect x="4.5" y="3.3" width="1.8" height="1.8" fill="#20a0e0"/></svg>
<svg class="a" style="left:5.2px;top:158.2px" width="12.2" height="12" viewBox="0 0 12.2 12"><rect x="1" y="1" width="10.2" height="10" fill="#ffd800" stroke="#8888a0" stroke-width=".7"/><rect x="0" y="0" width="1.6" height="1.6" fill="#6078c8"/><rect x="10.6" y="0" width="1.6" height="1.6" fill="#6078c8"/><rect x="0" y="10.4" width="1.6" height="1.6" fill="#6078c8"/><rect x="10.6" y="10.4" width="1.6" height="1.6" fill="#6078c8"/></svg>
<svg class="a" style="left:5.2px;top:175.6px" width="12.4" height="9.6" viewBox="0 0 12.4 9.6"><ellipse cx="6.2" cy="4.8" rx="5.6" ry="4" fill="#ffd800" stroke="#9090a0" stroke-width=".6"/><rect x="5.4" y="0" width="1.6" height="1.4" fill="#6078c8"/><rect x="5.4" y="8.2" width="1.6" height="1.4" fill="#6078c8"/></svg>
<svg class="a" style="left:5.8px;top:192.6px" width="11" height="11.6" viewBox="0 0 11 11.6"><path d="M2.6 10.8 V3.4 M1 5.4 H4.4 M2.6 3.4 Q2.6 1.2 4.4 1.4" stroke="#d89818" stroke-width="1.9" fill="none"/><circle cx="2.6" cy="2" r="1.5" fill="#d89818"/><path d="M8 1.2 V10.4 M6.2 1 H9.8 M6.2 10.6 H9.8" stroke="#1878a8" stroke-width="1.7" fill="none"/></svg>
<svg class="a" style="left:7.2px;top:210.6px" width="9" height="9.6" viewBox="0 0 9 9.6"><path d="M4.5 .4 V9.2 M.4 4.8 H8.6 M1.6 1.8 L7.4 7.8 M7.4 1.8 L1.6 7.8" stroke="#5a6a8a" stroke-width=".6"/><circle cx="4.5" cy="4.8" r="1.3" fill="#4080e0"/></svg>
<div class="a " style="left:4.4px;top:226.2px;width:14px;height:0.7px;background:#a8a59e;"></div>
<div class="a " style="left:4.4px;top:229.8px;width:13.8px;height:13.8px;background:#dedbd4;"></div>
<svg class="a" style="left:5px;top:231px" width="12.6" height="11.8" viewBox="0 0 12.6 11.8"><path d="M2.2 2 L10.4 9.8 M10.4 2 L2.2 9.8" stroke="#2c2c2c" stroke-width="3.1" stroke-linecap="round"/></svg>
<div class="a " style="left:4.4px;top:247.6px;width:14px;height:0.7px;background:#a8a59e;"></div>
<svg class="a" style="left:5.2px;top:252.2px" width="13" height="10.6" viewBox="0 0 13 10.6"><path d="M5.6 .6 V9.8 L.6 9.8 Z" fill="#4a4a4a"/><path d="M7.2 .6 V9.8 L12.4 9.8 Z" fill="#b0b0b0" stroke="#555" stroke-width=".6"/><path d="M6.4 0 V10.6" stroke="#222" stroke-width=".5"/></svg>
<svg class="a" style="left:5.2px;top:268.4px" width="12.6" height="12" viewBox="0 0 12.6 12"><path d="M11.6 5.2 H1 L11.6 .6 Z" fill="#b0b0b0" stroke="#555" stroke-width=".6"/><path d="M11.6 6.8 H1 L11.6 11.4 Z" fill="#4a4a4a"/><path d="M0 6 H12.6" stroke="#222" stroke-width=".5"/></svg>
<svg class="a" style="left:5.2px;top:285.6px" width="12.6" height="12.2" viewBox="0 0 12.6 12.2"><defs><linearGradient id="gsz" x1="0" y1="0" x2="1" y2="1"><stop offset="0" stop-color="#222"/><stop offset="1" stop-color="#aaa"/></linearGradient></defs><rect x="3" y=".6" width="8.4" height="7.6" fill="url(#gsz)"/><path d="M1.4 .6 V10.4 H12" stroke="#222" stroke-width="1.3" fill="none"/><path d="M12.4 10.4 L10.6 9.2 V11.6 Z" fill="#222"/></svg>
<svg class="a" style="left:5.4px;top:303.6px" width="12.6" height="11.8" viewBox="0 0 12.6 11.8"><rect x="0.6" y="0.6" width="3" height="2.8" fill="#d4d0c8" stroke="#333" stroke-width=".8"/><rect x="4.6" y="0.6" width="3" height="2.8" fill="#d4d0c8" stroke="#333" stroke-width=".8"/><rect x="8.6" y="0.6" width="3" height="2.8" fill="#d4d0c8" stroke="#333" stroke-width=".8"/><rect x="0.6" y="4.4" width="3" height="2.8" fill="#d4d0c8" stroke="#333" stroke-width=".8"/><rect x="4.6" y="4.4" width="3" height="2.8" fill="#d4d0c8" stroke="#333" stroke-width=".8"/><rect x="8.6" y="4.4" width="3" height="2.8" fill="#d4d0c8" stroke="#333" stroke-width=".8"/><rect x="0.6" y="8.2" width="3" height="2.8" fill="#d4d0c8" stroke="#333" stroke-width=".8"/><rect x="4.6" y="8.2" width="3" height="2.8" fill="#d4d0c8" stroke="#333" stroke-width=".8"/><rect x="8.6" y="8.2" width="3" height="2.8" fill="#d4d0c8" stroke="#333" stroke-width=".8"/></svg>
<div class="a " style="left:4.4px;top:317.2px;width:14px;height:0.7px;background:#a8a59e;"></div>
<div class="a " style="left:664.6px;top:62px;width:0.7px;height:444px;background:#fff;"></div>
<div class="a " style="left:665.4px;top:60.2px;width:183.6px;height:0.7px;background:#a4a29c;"></div>
<div class="a " style="left:665.4px;top:60.9px;width:183.6px;height:0.7px;background:#f6f5f2;"></div>
<div class="a " style="left:666.8px;top:64.2px;width:171.8px;height:0.8px;background:#fbfaf8;"></div>
<div class="a " style="left:666.8px;top:67px;width:171.8px;height:0.8px;background:#9a9892;"></div>
<div class="a " style="left:838px;top:64.2px;width:0.7px;height:3.6px;background:#9a9892;"></div>
<div class="a " style="left:666.8px;top:65px;width:171.2px;height:2px;background:#dcd9d2;"></div>
<svg class="a" style="left:841.4px;top:64.2px" width="5" height="4.4" viewBox="0 0 5 4.4"><path d="M.8 .6 L4.2 3.8 M4.2 .6 L.8 3.8" stroke="#000" stroke-width="1.2"/></svg>
<div class="a " style="left:668.2px;top:82px;width:177.6px;height:269.4px;border-left:.7px solid #fff;border-top:.7px solid #fff;border-right:.8px solid #6e6c68;border-bottom:.8px solid #6e6c68;"></div>
<div class="a " style="left:669px;top:73px;width:26.6px;height:9px;background:#d4d0c8;border-left:.7px solid #fff;border-top:.7px solid #fff;border-right:.8px solid #6e6c68;border-radius:1.5px 1.5px 0 0;"></div>
<span class="a t " style="left:671.8px;top:73.05px;font-size:7.3px;line-height:9.3px;color:#000;transform:scaleX(0.783);">С Л О И</span>
<div class="a " style="left:695.8px;top:73px;width:24.8px;height:9px;background:#d4d0c8;border-left:.7px solid #fff;border-top:.7px solid #fff;border-right:.8px solid #6e6c68;border-radius:1.5px 1.5px 0 0;"></div>
<span class="a t " style="left:699px;top:73.05px;font-size:7.3px;line-height:9.3px;color:#000;transform:scaleX(0.834);">Вывод</span>
<div class="a " style="left:720.8px;top:73px;width:25.8px;height:9px;background:#d4d0c8;border-left:.7px solid #fff;border-top:.7px solid #fff;border-right:.8px solid #6e6c68;border-radius:1.5px 1.5px 0 0;"></div>
<span class="a t " style="left:724.4px;top:73.05px;font-size:7.3px;line-height:9.3px;color:#000;transform:scaleX(0.867);">Файлы</span>
<div class="a " style="left:784px;top:73px;width:22.2px;height:9px;background:#d4d0c8;border-left:.7px solid #fff;border-top:.7px solid #fff;border-right:.8px solid #6e6c68;border-radius:1.5px 1.5px 0 0;"></div>
<span class="a t " style="left:787px;top:73.05px;font-size:7.3px;line-height:9.3px;color:#000;transform:scaleX(0.795);">Тест</span>
<div class="a " style="left:806.4px;top:73px;width:21.6px;height:9px;background:#d4d0c8;border-left:.7px solid #fff;border-top:.7px solid #fff;border-right:.8px solid #6e6c68;border-radius:1.5px 1.5px 0 0;"></div>
<span class="a t " style="left:809.3px;top:73.05px;font-size:7.3px;line-height:9.3px;color:#000;transform:scaleX(0.867);">Транс</span>
<div class="a " style="left:746px;top:70.8px;width:38px;height:12px;background:#d4d0c8;border-left:.7px solid #fff;border-top:.7px solid #fff;border-right:.8px solid #6e6c68;border-radius:1.5px 1.5px 0 0;"></div>
<span class="a t " style="left:750px;top:71.55px;font-size:7.3px;line-height:9.3px;color:#000;transform:scaleX(0.847);">Настройки</span>
<div class="a " style="left:826.8px;top:71px;width:21.2px;height:11px;background:#d4d0c8;"></div>
<div class="a btn" style="left:827.6px;top:72px;width:8.8px;height:8px;"></div>
<div class="a btn" style="left:836.6px;top:72px;width:8.8px;height:8px;"></div>
<svg class="a" style="left:827.6px;top:72px" width="8.8" height="8" viewBox="0 0 8.8 8"><polygon points="5.4,2 5.4,6 3,4" fill="#000"/></svg>
<svg class="a" style="left:836.6px;top:72px" width="8.8" height="8" viewBox="0 0 8.8 8"><polygon points="3.4,2 3.4,6 5.8,4" fill="#000"/></svg>
<svg class="a" style="left:669px;top:85.4px" width="8" height="8" viewBox="-4 -4 8 8"><circle r="2.9" fill="#fff"/><path d="M-2.2 2.2 A3.1 3.1 0 0 1 2.2 -2.2" stroke="#707070" stroke-width=".9" fill="none"/><path d="M2.2 -2.2 A3.1 3.1 0 0 1 -2.2 2.2" stroke="#f8f6f2" stroke-width=".9" fill="none"/><circle r="1.1" fill="#000"/></svg>
<span class="a t " style="left:678.3px;top:84.75px;font-size:7.3px;line-height:9.3px;transform:scaleX(0.85);">Обработка</span>
<svg class="a" style="left:713px;top:85.4px" width="8" height="8" viewBox="-4 -4 8 8"><circle r="2.9" fill="#fff"/><path d="M-2.2 2.2 A3.1 3.1 0 0 1 2.2 -2.2" stroke="#707070" stroke-width=".9" fill="none"/><path d="M2.2 -2.2 A3.1 3.1 0 0 1 -2.2 2.2" stroke="#f8f6f2" stroke-width=".9" fill="none"/></svg>
<span class="a t " style="left:723px;top:84.75px;font-size:7.3px;line-height:9.3px;transform:scaleX(0.86);">Доп. функ.</span>
<svg class="a" style="left:759.3px;top:85.4px" width="8" height="8" viewBox="-4 -4 8 8"><circle r="2.9" fill="#fff"/><path d="M-2.2 2.2 A3.1 3.1 0 0 1 2.2 -2.2" stroke="#707070" stroke-width=".9" fill="none"/><path d="M2.2 -2.2 A3.1 3.1 0 0 1 -2.2 2.2" stroke="#f8f6f2" stroke-width=".9" fill="none"/></svg>
<span class="a t " style="left:769px;top:84.75px;font-size:7.3px;line-height:9.3px;transform:scaleX(0.819);">Прочие</span>
<div class="a fld" style="left:669.2px;top:96px;width:172.2px;height:219px;background:#fff;"></div>
<div class="a" style="left:670.2px;top:97px;width:170.4px;height:217.2px;overflow:hidden">
<div class="a " style="left:10.8px;top:0px;width:0.7px;height:219px;background:#dcdcdc;"></div>
<div class="a " style="left:106.6px;top:0px;width:0.7px;height:219px;background:#dcdcdc;"></div>
<div class="a " style="left:10.2px;top:-0.49px;width:96px;height:10.38px;background:#0000c4;"></div>
<span class="a t " style="left:12.8px;top:0.45px;font-size:7.3px;line-height:9.3px;color:#fff;transform:scaleX(0.903);">Параметры резки:</span>
<div class="a " style="left:10.8px;top:9.99px;width:152px;height:0.7px;background:#dcdcdc;"></div>
<svg class="a" style="left:1.4px;top:1.3px" width="7.4" height="7.4" viewBox="0 0 7.4 7.4"><rect x=".5" y=".5" width="6.4" height="6.4" fill="#fff" stroke="#555" stroke-width=".8"/><path d="M.6 3.7 H6.8" stroke="#333" stroke-width=".8"/></svg>
<span class="a t " style="left:12.8px;top:12.03px;font-size:7.3px;line-height:9.3px;color:#000;transform:scaleX(0.948);">Скорость свободного хода (п</span>
<span class="a t " style="left:109.4px;top:12.03px;font-size:7.3px;line-height:9.3px;color:#000;transform:scaleX(0.93);">200.000</span>
<div class="a " style="left:10.8px;top:21.17px;width:152px;height:0.7px;background:#dcdcdc;"></div>
<span class="a t " style="left:12.8px;top:23.21px;font-size:7.3px;line-height:9.3px;color:#000;transform:scaleX(0.957);">Ускорение свободного хода (</span>
<span class="a t " style="left:109.4px;top:23.21px;font-size:7.3px;line-height:9.3px;color:#000;transform:scaleX(0.93);">2000.000</span>
<div class="a " style="left:10.8px;top:32.35px;width:152px;height:0.7px;background:#dcdcdc;"></div>
<span class="a t " style="left:12.8px;top:34.39px;font-size:7.3px;line-height:9.3px;color:#000;transform:scaleX(0.933);">Скорость Старта (mm/s)</span>
<span class="a t " style="left:109.4px;top:34.39px;font-size:7.3px;line-height:9.3px;color:#000;transform:scaleX(0.93);">12.000</span>
<div class="a " style="left:10.8px;top:43.53px;width:152px;height:0.7px;background:#dcdcdc;"></div>
<span class="a t " style="left:12.8px;top:45.57px;font-size:7.3px;line-height:9.3px;color:#000;transform:scaleX(0.97);">Мин. ускорение (mm/s2)</span>
<span class="a t " style="left:109.4px;top:45.57px;font-size:7.3px;line-height:9.3px;color:#000;transform:scaleX(0.93);">750.000</span>
<div class="a " style="left:10.8px;top:54.71px;width:152px;height:0.7px;background:#dcdcdc;"></div>
<span class="a t " style="left:12.8px;top:56.75px;font-size:7.3px;line-height:9.3px;color:#000;transform:scaleX(0.962);">Макс. ускорение (mm/s2)</span>
<span class="a t " style="left:109.4px;top:56.75px;font-size:7.3px;line-height:9.3px;color:#000;transform:scaleX(0.93);">2000.000</span>
<div class="a " style="left:10.8px;top:65.89px;width:152px;height:0.7px;background:#dcdcdc;"></div>
<span class="a t " style="left:12.8px;top:67.93px;font-size:7.3px;line-height:9.3px;color:#000;transform:scaleX(0.938);">Задержка свободного хода (с</span>
<span class="a t " style="left:109.4px;top:67.93px;font-size:7.3px;line-height:9.3px;color:#000;transform:scaleX(0.93);">0.000</span>
<div class="a " style="left:10.8px;top:77.07px;width:152px;height:0.7px;background:#dcdcdc;"></div>
<span class="a t " style="left:12.8px;top:79.11px;font-size:7.3px;line-height:9.3px;color:#000;transform:scaleX(0.949);">Фактор ускорения(0%-200%)</span>
<span class="a t " style="left:109.4px;top:79.11px;font-size:7.3px;line-height:9.3px;color:#000;transform:scaleX(0.93);">80</span>
<div class="a " style="left:10.8px;top:88.25px;width:152px;height:0.7px;background:#dcdcdc;"></div>
<span class="a t " style="left:12.8px;top:90.29px;font-size:7.3px;line-height:9.3px;color:#000;transform:scaleX(0.968);">G0 Фактор ускорения(0%-20</span>
<span class="a t " style="left:109.4px;top:90.29px;font-size:7.3px;line-height:9.3px;color:#000;transform:scaleX(0.93);">120</span>
<div class="a " style="left:10.8px;top:99.43px;width:152px;height:0.7px;background:#dcdcdc;"></div>
<span class="a t " style="left:12.8px;top:101.47px;font-size:7.3px;line-height:9.3px;color:#000;transform:scaleX(0.989);">Фактор скорости(0%-200%)</span>
<span class="a t " style="left:109.4px;top:101.47px;font-size:7.3px;line-height:9.3px;color:#000;transform:scaleX(0.93);">80</span>
<div class="a " style="left:10.8px;top:110.61px;width:152px;height:0.7px;background:#dcdcdc;"></div>
<span class="a t " style="left:12.8px;top:112.65px;font-size:7.3px;line-height:9.3px;color:#000;transform:scaleX(0.943);">Настройка в один клик</span>
<div class="a " style="left:10.8px;top:121.79px;width:152px;height:0.7px;background:#dcdcdc;"></div>
<span class="a t " style="left:12.8px;top:123.83px;font-size:7.3px;line-height:9.3px;color:#000;transform:scaleX(0.917);">Параметры гравировки</span>
<div class="a " style="left:10.8px;top:132.97px;width:152px;height:0.7px;background:#dcdcdc;"></div>
<svg class="a" style="left:1.4px;top:124.28px" width="7.4" height="7.4" viewBox="0 0 7.4 7.4"><rect x=".5" y=".5" width="6.4" height="6.4" fill="#fff" stroke="#555" stroke-width=".8"/><path d="M.6 3.7 H6.8" stroke="#333" stroke-width=".8"/></svg>
<span class="a t " style="left:12.8px;top:135.01px;font-size:7.3px;line-height:9.3px;color:#000;transform:scaleX(0.943);">X Скорость старта (mm/s)</span>
<span class="a t " style="left:109.4px;top:135.01px;font-size:7.3px;line-height:9.3px;color:#000;transform:scaleX(0.93);">20.000</span>
<div class="a " style="left:10.8px;top:144.15px;width:152px;height:0.7px;background:#dcdcdc;"></div>
<span class="a t " style="left:12.8px;top:146.19px;font-size:7.3px;line-height:9.3px;color:#000;transform:scaleX(0.947);">Y Скорость старта (mm/s)</span>
<span class="a t " style="left:109.4px;top:146.19px;font-size:7.3px;line-height:9.3px;color:#000;transform:scaleX(0.93);">15.000</span>
<div class="a " style="left:10.8px;top:155.33px;width:152px;height:0.7px;background:#dcdcdc;"></div>
<span class="a t " style="left:12.8px;top:157.37px;font-size:7.3px;line-height:9.3px;color:#000;transform:scaleX(0.956);">X Ускорение (mm/s2)</span>
<span class="a t " style="left:109.4px;top:157.37px;font-size:7.3px;line-height:9.3px;color:#000;transform:scaleX(0.93);">8000.000</span>
<div class="a " style="left:10.8px;top:166.51px;width:152px;height:0.7px;background:#dcdcdc;"></div>
<span class="a t " style="left:12.8px;top:168.55px;font-size:7.3px;line-height:9.3px;color:#000;transform:scaleX(0.958);">Y Ускорение (mm/s2)</span>
<span class="a t " style="left:109.4px;top:168.55px;font-size:7.3px;line-height:9.3px;color:#000;transform:scaleX(0.93);">2000.000</span>
<div class="a " style="left:10.8px;top:177.69px;width:152px;height:0.7px;background:#dcdcdc;"></div>
<span class="a t " style="left:12.8px;top:179.73px;font-size:7.3px;line-height:9.3px;color:#000;transform:scaleX(0.923);">Скорость шага (mm/s)</span>
<span class="a t " style="left:109.4px;top:179.73px;font-size:7.3px;line-height:9.3px;color:#000;transform:scaleX(0.93);">150.000</span>
<div class="a " style="left:10.8px;top:188.87px;width:152px;height:0.7px;background:#dcdcdc;"></div>
<span class="a t " style="left:12.8px;top:190.91px;font-size:7.3px;line-height:9.3px;color:#000;transform:scaleX(0.95);">Режим гравировки</span>
<span class="a t " style="left:109.4px;top:190.91px;font-size:7.3px;line-height:9.3px;color:#000;transform:scaleX(0.93);">Обычный режим</span>
<div class="a " style="left:10.8px;top:200.05px;width:152px;height:0.7px;background:#dcdcdc;"></div>
<span class="a t " style="left:12.8px;top:202.09px;font-size:7.3px;line-height:9.3px;color:#000;transform:scaleX(0.969);">Размер пятна(50~99%)(mm)</span>
<span class="a t " style="left:109.4px;top:202.09px;font-size:7.3px;line-height:9.3px;color:#000;transform:scaleX(0.93);">98.000</span>
<div class="a " style="left:10.8px;top:211.23px;width:152px;height:0.7px;background:#dcdcdc;"></div>
<span class="a t " style="left:12.8px;top:213.27px;font-size:7.3px;line-height:9.3px;color:#000;transform:scaleX(0.949);">Фактор гравировки</span>
<span class="a t " style="left:109.4px;top:213.27px;font-size:7.3px;line-height:9.3px;color:#000;transform:scaleX(0.93);">100</span>
<div class="a " style="left:10.8px;top:222.41px;width:152px;height:0.7px;background:#dcdcdc;"></div>
</div>
<div class="a " style="left:833px;top:97.4px;width:7.8px;height:217px;background:#eceae6;"></div>
<div class="a btn" style="left:833px;top:105.6px;width:7.8px;height:189.8px;"></div>
<div class="a btn" style="left:833px;top:97.4px;width:7.8px;height:8.2px;"></div>
<svg class="a" style="left:833px;top:97.4px" width="7.8" height="8.2" viewBox="0 0 7.8 8.2"><polygon points="1.8,5.2 6,5.2 3.9,2.8" fill="#000"/></svg>
<div class="a btn" style="left:833px;top:306px;width:7.8px;height:8.4px;"></div>
<svg class="a" style="left:833px;top:306px" width="7.8" height="8.4" viewBox="0 0 7.8 8.4"><polygon points="1.8,3.2 6,3.2 3.9,5.6" fill="#000"/></svg>
<div class="a fld" style="left:669.2px;top:319px;width:173.2px;height:9.8px;background:#d4d0c8;"></div>
<div class="a btn" style="left:668.8px;top:329.8px;width:38px;height:12.8px;"></div>
<span class="a t " style="left:675.5px;top:331.05px;font-size:7.3px;line-height:9.3px;transform:scaleX(0.858);">Открыть</span>
<div class="a btn" style="left:712px;top:329.8px;width:38.4px;height:12.8px;"></div>
<span class="a t " style="left:722.37px;top:331.35px;font-size:7.3px;line-height:9.3px;color:#8a8780;transform:scaleX(0.93);text-shadow:.6px .6px 0 #fff;">Сохр.</span>
<div class="a btn" style="left:755.8px;top:329.8px;width:38.4px;height:12.8px;"></div>
<span class="a t " style="left:762.8px;top:331.05px;font-size:7.3px;line-height:9.3px;transform:scaleX(0.891);">Считать</span>
<div class="a btn" style="left:799.2px;top:329.8px;width:38.8px;height:12.8px;"></div>
<span class="a t " style="left:805.4px;top:331.35px;font-size:7.3px;line-height:9.3px;color:#8a8780;transform:scaleX(0.846);text-shadow:.6px .6px 0 #fff;">Записать</span>
<div class="a " style="left:665.4px;top:356px;width:183.6px;height:0.8px;background:#9a9892;"></div>
<div class="a " style="left:665.4px;top:356.8px;width:183.6px;height:0.7px;background:#f4f3f0;"></div>
<div class="a " style="left:666.8px;top:360px;width:171.8px;height:0.8px;background:#fbfaf8;"></div>
<div class="a " style="left:666.8px;top:362.2px;width:171.8px;height:0.8px;background:#9a9892;"></div>
<div class="a " style="left:838px;top:360px;width:0.7px;height:3px;background:#9a9892;"></div>
<div class="a " style="left:666.8px;top:360.8px;width:171.2px;height:1.4px;background:#dcd9d2;"></div>
<svg class="a" style="left:841.4px;top:359.6px" width="5" height="4.4" viewBox="0 0 5 4.4"><path d="M.8 .6 L4.2 3.8 M4.2 .6 L.8 3.8" stroke="#000" stroke-width="1.2"/></svg>
<div class="a grp" style="left:667.8px;top:370.2px;width:173.6px;height:100.8px;"></div>
<div class="a " style="left:671.3px;top:367.2px;width:61px;height:6px;background:#d4d0c8;"></div>
<span class="a t " style="left:672.8px;top:365.55px;font-size:7.3px;line-height:9.3px;transform:scaleX(0.829);">Управление станком</span>
<div class="a btn" style="left:671.8px;top:375.6px;width:166px;height:16px;border-right:1.7px solid #4a4a4a;border-bottom:1.7px solid #4a4a4a;"></div>
<span class="a t " style="left:682.8px;top:378.45px;font-size:7.3px;line-height:9.3px;transform:scaleX(0.867);">= З А Г Р У З И Т Ь   М А К Е Т   В   С Т А Н О К =</span>
<div class="a btn" style="left:671.8px;top:394.2px;width:56.8px;height:14px;"></div>
<span class="a t " style="left:687.9px;top:396.05px;font-size:7.3px;line-height:9.3px;transform:scaleX(0.768);">С Т А Р Т</span>
<div class="a btn" style="left:730.2px;top:394.2px;width:58.6px;height:14px;"></div>
<span class="a t " style="left:736px;top:396.05px;font-size:7.3px;line-height:9.3px;transform:scaleX(0.857);">Пауза/Продолж.</span>
<div class="a btn" style="left:791.6px;top:394.2px;width:46.2px;height:14px;"></div>
<span class="a t " style="left:804.9px;top:396.05px;font-size:7.3px;line-height:9.3px;transform:scaleX(0.733);">С Т О П</span>
<div class="a btn" style="left:671.8px;top:409.4px;width:56.8px;height:13px;"></div>
<span class="a t " style="left:677.2px;top:410.75px;font-size:7.3px;line-height:9.3px;transform:scaleX(0.833);">Сохр *.RD-файл</span>
<div class="a btn" style="left:730.2px;top:409.4px;width:58.6px;height:13px;"></div>
<span class="a t " style="left:734px;top:410.75px;font-size:7.3px;line-height:9.3px;transform:scaleX(0.845);">Загруз *.RD-файл</span>
<div class="a btn" style="left:791.6px;top:409.4px;width:46.2px;height:13px;"></div>
<span class="a t " style="left:800.2px;top:410.75px;font-size:7.3px;line-height:9.3px;transform:scaleX(0.847);">Рез рамки</span>
<div class="a btn" style="left:791.6px;top:424.2px;width:46.2px;height:12.2px;"></div>
<span class="a t " style="left:796px;top:425.15px;font-size:7.3px;line-height:9.3px;transform:scaleX(0.845);">Обвод рамки</span>
<div class="a fld" style="left:673.2px;top:424.8px;width:6.8px;height:6.8px;background:#fff;"></div>
<svg class="a" style="left:673.2px;top:424.8px" width="6.8" height="6.8" viewBox="0 0 7 7"><path d="M1.4 3.4 L2.9 5 L5.6 1.8" stroke="#000" stroke-width="1.3" fill="none"/></svg>
<span class="a t " style="left:682.4px;top:423.65px;font-size:7.3px;line-height:9.3px;transform:scaleX(0.854);">Оптимизировать путь</span>
<div class="a fld" style="left:673.2px;top:435.2px;width:6.8px;height:6.8px;background:#fff;"></div>
<span class="a t " style="left:682.4px;top:434.05px;font-size:7.3px;line-height:9.3px;transform:scaleX(0.852);">Вывод выбранного объекта</span>
<div class="a fld" style="left:682.6px;top:445.4px;width:6.8px;height:6.8px;background:#d4d0c8;"></div>
<span class="a t " style="left:692px;top:444.15px;font-size:7.3px;line-height:9.3px;color:#8a8780;transform:scaleX(0.836);text-shadow:.6px .6px 0 #fff;">Старт по выбранному</span>
<span class="a t " style="left:681.2px;top:459.35px;font-size:7.3px;line-height:9.3px;transform:scaleX(0.84);">Начальное положение:</span>
<div class="a fld" style="left:750px;top:457.8px;width:87.2px;height:10.8px;background:#fff;"></div>
<div class="a btn" style="left:828px;top:459px;width:8.4px;height:8.8px;"></div>
<svg class="a" style="left:830.1px;top:462.3px" width="4" height="2.4" viewBox="0 0 4 2.4"><polygon points="0,0 4,0 2,2.4" fill="#000"/></svg>
<span class="a t " style="left:752px;top:458.55px;font-size:7.3px;line-height:9.3px;color:#000;transform:scaleX(0.93);">Текущее</span>
<div class="a grp" style="left:667.8px;top:478px;width:173.6px;height:22.8px;"></div>
<div class="a " style="left:671.3px;top:475px;width:66px;height:6px;background:#d4d0c8;"></div>
<span class="a t " style="left:672.8px;top:473.35px;font-size:7.3px;line-height:9.3px;transform:scaleX(0.826);">Связь с контроллером</span>
<div class="a btn" style="left:671.8px;top:483.6px;width:59.6px;height:12.2px;"></div>
<span class="a t " style="left:677.3px;top:484.55px;font-size:7.3px;line-height:9.3px;transform:scaleX(0.852);">Настройки порта</span>
<div class="a fld" style="left:735px;top:485px;width:102.2px;height:10.6px;background:#fff;"></div>
<div class="a btn" style="left:828px;top:486.2px;width:8.4px;height:8.6px;"></div>
<svg class="a" style="left:830.1px;top:489.4px" width="4" height="2.4" viewBox="0 0 4 2.4"><polygon points="0,0 4,0 2,2.4" fill="#000"/></svg>
<span class="a t " style="left:737px;top:485.8px;font-size:7px;line-height:9px;color:#000;transform:scaleX(0.93);">Device---(USB:Авто)</span>
<div class="a " style="left:665.4px;top:503.4px;width:183.6px;height:0.7px;background:#bcb9b2;"></div>
<div class="a " style="left:665.4px;top:504.1px;width:183.6px;height:0.7px;background:#eeece8;"></div>
<div class="a " style="left:147px;top:107.4px;width:326.2px;height:258.6px;background:#d4d0c8;border-top:.7px solid #d4d0c8;border-left:.7px solid #d4d0c8;border-right:.9px solid #404040;border-bottom:.9px solid #404040;box-shadow:inset .7px .7px 0 #fff, inset -.7px -.7px 0 #808080;"></div>
<div class="a " style="left:148.8px;top:109px;width:322.4px;height:10px;background:linear-gradient(90deg,#0a246a 0%,#2c4c94 35%,#6c94d0 70%,#a6caf0 100%);"></div>
<span class="a t " style="left:150.2px;top:109.7px;font-size:7.4px;line-height:9.4px;color:#fff;font-weight:bold;transform:scaleX(0.883);">Глобальные настройки контроллера</span>
<div class="a btn" style="left:461.4px;top:110.4px;width:8.4px;height:7.2px;"></div>
<svg class="a" style="left:461.4px;top:110.8px" width="8.4" height="6.6" viewBox="0 0 8.4 6.6"><path d="M2.2 1.4 L6 5 M6 1.4 L2.2 5" stroke="#000" stroke-width="1.1"/></svg>
<div class="a " style="left:152.2px;top:133.4px;width:317.8px;height:212.2px;border-radius:0 0 1.5px 1.5px;border-left:.7px solid #fff;border-top:.7px solid #fff;border-right:.8px solid #5a5a5a;border-bottom:.8px solid #5a5a5a;box-shadow:inset -.7px -.7px 0 #a09d96;"></div>
<div class="a " style="left:211.2px;top:124px;width:54px;height:9.4px;background:#d4d0c8;border-left:.7px solid #fff;border-top:.7px solid #fff;border-right:.8px solid #5a5a5a;border-radius:1.5px 1.5px 0 0;"></div>
<span class="a t " style="left:214px;top:124.75px;font-size:7.3px;line-height:9.3px;color:#000;transform:scaleX(0.84);">Сброс счётчиков</span>
<div class="a " style="left:265.4px;top:124px;width:52.4px;height:9.4px;background:#d4d0c8;border-left:.7px solid #fff;border-top:.7px solid #fff;border-right:.8px solid #5a5a5a;border-radius:1.5px 1.5px 0 0;"></div>
<span class="a t " style="left:269px;top:124.75px;font-size:7.3px;line-height:9.3px;color:#000;transform:scaleX(0.863);">Логотип панели</span>
<div class="a " style="left:152.2px;top:122.4px;width:59.2px;height:11.8px;background:#d4d0c8;border-left:.7px solid #fff;border-top:.7px solid #fff;border-right:.8px solid #5a5a5a;border-radius:1.5px 1.5px 0 0;"></div>
<span class="a t " style="left:155.6px;top:123.75px;font-size:7.3px;line-height:9.3px;color:#000;transform:scaleX(0.863);">Настройки станка</span>
<div class="a fld" style="left:153.4px;top:136.8px;width:37px;height:184.4px;background:#fff;"></div>
<span class="a t " style="left:155px;top:137.75px;font-size:7.3px;line-height:9.3px;transform:scaleX(0.847);">Моторы</span>
<span class="a t " style="left:155px;top:146.82px;font-size:7.3px;line-height:9.3px;transform:scaleX(0.863);">Лазер</span>
<span class="a t " style="left:155px;top:155.89px;font-size:7.3px;line-height:9.3px;transform:scaleX(0.923);">Другое</span>
<span class="a t " style="left:155px;top:164.96px;font-size:7.3px;line-height:9.3px;transform:scaleX(0.765);">Софт PLC</span>
<div class="a " style="left:191.6px;top:136.8px;width:276.2px;height:185px;border:.8px solid #85837d;box-shadow:.7px .7px 0 #f4f3f0, inset .7px .7px 0 #f4f3f0;"></div>
<svg class="a" style="left:207px;top:139.8px" width="8" height="8" viewBox="-4 -4 8 8"><circle r="2.9" fill="#fff"/><path d="M-2.2 2.2 A3.1 3.1 0 0 1 2.2 -2.2" stroke="#707070" stroke-width=".9" fill="none"/><path d="M2.2 -2.2 A3.1 3.1 0 0 1 -2.2 2.2" stroke="#f8f6f2" stroke-width=".9" fill="none"/><circle r="1.1" fill="#000"/></svg>
<span class="a t " style="left:217px;top:140.3px;font-size:6.6px;line-height:8.6px;transform:scaleX(0.93);">X</span>
<svg class="a" style="left:233.6px;top:139.8px" width="8" height="8" viewBox="-4 -4 8 8"><circle r="2.9" fill="#fff"/><path d="M-2.2 2.2 A3.1 3.1 0 0 1 2.2 -2.2" stroke="#707070" stroke-width=".9" fill="none"/><path d="M2.2 -2.2 A3.1 3.1 0 0 1 -2.2 2.2" stroke="#f8f6f2" stroke-width=".9" fill="none"/></svg>
<span class="a t " style="left:243.6px;top:140.3px;font-size:6.6px;line-height:8.6px;transform:scaleX(0.93);">Y</span>
<svg class="a" style="left:260px;top:139.8px" width="8" height="8" viewBox="-4 -4 8 8"><circle r="2.9" fill="#fff"/><path d="M-2.2 2.2 A3.1 3.1 0 0 1 2.2 -2.2" stroke="#707070" stroke-width=".9" fill="none"/><path d="M2.2 -2.2 A3.1 3.1 0 0 1 -2.2 2.2" stroke="#f8f6f2" stroke-width=".9" fill="none"/></svg>
<span class="a t " style="left:270.4px;top:140.3px;font-size:6.6px;line-height:8.6px;transform:scaleX(0.93);">Z</span>
<svg class="a" style="left:287px;top:139.8px" width="8" height="8" viewBox="-4 -4 8 8"><circle r="2.9" fill="#fff"/><path d="M-2.2 2.2 A3.1 3.1 0 0 1 2.2 -2.2" stroke="#707070" stroke-width=".9" fill="none"/><path d="M2.2 -2.2 A3.1 3.1 0 0 1 -2.2 2.2" stroke="#f8f6f2" stroke-width=".9" fill="none"/></svg>
<span class="a t " style="left:297px;top:140.3px;font-size:6.6px;line-height:8.6px;transform:scaleX(0.93);">U</span>
<div class="a " style="left:194px;top:151.4px;width:268px;height:0.7px;background:#a4a29c;"></div>
<div class="a " style="left:194px;top:152.1px;width:268px;height:0.7px;background:#f6f5f2;"></div>
<span class="a t " style="left:199.6px;top:157.95px;font-size:7.3px;line-height:9.3px;transform:scaleX(0.842);">Полярн. направления:</span>
<div class="a fld" style="left:266px;top:155.8px;width:36px;height:11.4px;background:#fff;"></div>
<div class="a btn" style="left:292.2px;top:157px;width:9px;height:9.4px;"></div>
<svg class="a" style="left:294.6px;top:160.6px" width="4" height="2.4" viewBox="0 0 4 2.4"><polygon points="0,0 4,0 2,2.4" fill="#000"/></svg>
<span class="a t " style="left:268px;top:156.85px;font-size:7.3px;line-height:9.3px;color:#000;transform:scaleX(0.858);">Негатив</span>
<span class="a t " style="left:225px;top:170.95px;font-size:7.3px;line-height:9.3px;transform:scaleX(0.893);">Тип датчика:</span>
<div class="a fld" style="left:266px;top:170.2px;width:36px;height:10.7px;background:#fff;"></div>
<div class="a btn" style="left:292.2px;top:171.4px;width:9px;height:8.7px;"></div>
<svg class="a" style="left:294.6px;top:174.65px" width="4" height="2.4" viewBox="0 0 4 2.4"><polygon points="0,0 4,0 2,2.4" fill="#000"/></svg>
<span class="a t " style="left:268px;top:170.9px;font-size:7.3px;line-height:9.3px;color:#000;transform:scaleX(0.83);">Позитив</span>
<span class="a t " style="left:209.6px;top:184.35px;font-size:7.3px;line-height:9.3px;transform:scaleX(0.833);">Режим мотора ШД:</span>
<div class="a fld" style="left:266px;top:183.6px;width:62px;height:10.6px;background:#fff;"></div>
<div class="a" style="left:267px;top:184.4px;width:52px;height:9px;overflow:hidden">
<span class="a t " style="left:1.6px;top:-0.25px;font-size:7.3px;line-height:9.3px;transform:scaleX(0.91);">Пульс+Направление</span>
</div>
<div class="a btn" style="left:318.6px;top:184.8px;width:8.6px;height:8.6px;"></div>
<svg class="a" style="left:320.9px;top:188px" width="4" height="2.4" viewBox="0 0 4 2.4"><polygon points="0,0 4,0 2,2.4" fill="#000"/></svg>
<span class="a t " style="left:222px;top:197.75px;font-size:7.3px;line-height:9.3px;transform:scaleX(0.812);">Размер по оси:</span>
<div class="a fld" style="left:266px;top:197px;width:32px;height:10.2px;background:#fff;"></div>
<span class="a t " style="left:270.4px;top:197.45px;font-size:7.3px;line-height:9.3px;color:#000;transform:scaleX(0.8);">1000.000</span>
<span class="a t " style="left:300.4px;top:197.7px;font-size:7px;line-height:9px;transform:scaleX(0.652);">mm</span>
<span class="a t " style="left:227px;top:211.35px;font-size:7.3px;line-height:9.3px;transform:scaleX(0.888);">Отступ от 0:</span>
<div class="a fld" style="left:266px;top:210.6px;width:32px;height:9.8px;background:#fff;"></div>
<span class="a t " style="left:270.4px;top:210.85px;font-size:7.3px;line-height:9.3px;color:#000;transform:scaleX(0.8);">0.000</span>
<span class="a t " style="left:300.4px;top:211.3px;font-size:7px;line-height:9px;transform:scaleX(0.652);">mm</span>
<span class="a t " style="left:338px;top:157.95px;font-size:7.3px;line-height:9.3px;transform:scaleX(0.829);">Микрошаг (um):</span>
<div class="a fld" style="left:384px;top:156.6px;width:40.4px;height:10.4px;background:#fff;"></div>
<span class="a t " style="left:388.4px;top:157.15px;font-size:7.3px;line-height:9.3px;color:#000;transform:scaleX(0.8);">3.75000</span>
<div class="a btn" style="left:425.6px;top:155.8px;width:19px;height:12.2px;"></div>
<span class="a t " style="left:432.27px;top:156.75px;font-size:7.3px;line-height:9.3px;transform:scaleX(0.93);">...</span>
<div class="a fld" style="left:354.4px;top:190.3px;width:6.6px;height:6.6px;background:#fff;"></div>
<span class="a t " style="left:363.6px;top:189.35px;font-size:7.3px;line-height:9.3px;transform:scaleX(0.863);">Вкл. обратный концевик</span>
<div class="a fld" style="left:354.4px;top:199.3px;width:6.6px;height:6.6px;background:#fff;"></div>
<span class="a t " style="left:363.6px;top:198.35px;font-size:7.3px;line-height:9.3px;transform:scaleX(0.823);">По переднему фронту ШИМ</span>
<div class="a fld" style="left:354.4px;top:209.1px;width:6.6px;height:6.6px;background:#fff;"></div>
<svg class="a" style="left:354.4px;top:209.1px" width="6.6" height="6.6" viewBox="0 0 7 7"><path d="M1.4 3.4 L2.9 5 L5.6 1.8" stroke="#000" stroke-width="1.3" fill="none"/></svg>
<span class="a t " style="left:363.6px;top:208.15px;font-size:7.3px;line-height:9.3px;transform:scaleX(0.827);">Вкл. концевик HOME</span>
<div class="a " style="left:194px;top:224.8px;width:268px;height:0.7px;background:#a4a29c;"></div>
<div class="a " style="left:194px;top:225.5px;width:268px;height:0.7px;background:#f6f5f2;"></div>
<span class="a t " style="left:223px;top:229.35px;font-size:7.3px;line-height:9.3px;transform:scaleX(0.861);">Нач.скорость:</span>
<div class="a fld" style="left:266px;top:228.6px;width:32px;height:10px;background:#fff;"></div>
<span class="a t " style="left:270.4px;top:228.95px;font-size:7.3px;line-height:9.3px;color:#000;transform:scaleX(0.8);">20.000</span>
<span class="a t " style="left:300px;top:229.1px;font-size:7px;line-height:9px;transform:scaleX(0.76);">mm/s</span>
<span class="a t " style="left:218px;top:243.35px;font-size:7.3px;line-height:9.3px;transform:scaleX(0.854);">Макс. скорость:</span>
<div class="a fld" style="left:266px;top:242.2px;width:32px;height:10.2px;background:#fff;"></div>
<span class="a t " style="left:270.4px;top:242.65px;font-size:7.3px;line-height:9.3px;color:#000;transform:scaleX(0.8);">500.000</span>
<span class="a t " style="left:300px;top:243.1px;font-size:7px;line-height:9px;transform:scaleX(0.76);">mm/s</span>
<span class="a t " style="left:345px;top:229.15px;font-size:7.3px;line-height:9.3px;transform:scaleX(0.844);">Макс. ускорение:</span>
<div class="a fld" style="left:396px;top:228.6px;width:31.2px;height:10px;background:#fff;"></div>
<div class="a" style="left:397px;top:229.4px;width:29px;height:8.4px;overflow:hidden">
<span class="a t " style="left:2.6px;top:-0.45px;font-size:7.3px;line-height:9.3px;transform:scaleX(0.794);">10000.000</span>
</div>
<span class="a t " style="left:429px;top:228.9px;font-size:7px;line-height:9px;transform:scaleX(0.829);">mm/s2</span>
<span class="a t " style="left:339px;top:243.35px;font-size:7.3px;line-height:9.3px;transform:scaleX(0.827);">Ускорение ЧП стоп:</span>
<div class="a fld" style="left:396px;top:242.2px;width:31.2px;height:10.2px;background:#fff;"></div>
<div class="a" style="left:397px;top:243px;width:29px;height:8.4px;overflow:hidden">
<span class="a t " style="left:2.6px;top:-0.35px;font-size:7.3px;line-height:9.3px;transform:scaleX(0.794);">30000.000</span>
</div>
<span class="a t " style="left:429px;top:243.1px;font-size:7px;line-height:9px;transform:scaleX(0.829);">mm/s2</span>
<div class="a grp" style="left:193px;top:258.8px;width:269.2px;height:32.4px;"></div>
<div class="a " style="left:196.5px;top:255.8px;width:84.6px;height:6px;background:#d4d0c8;"></div>
<span class="a t " style="left:198px;top:254.15px;font-size:7.3px;line-height:9.3px;transform:scaleX(0.841);">Управление с кнопок панели</span>
<span class="a t " style="left:223px;top:265.75px;font-size:7.3px;line-height:9.3px;transform:scaleX(0.861);">Нач.скорость:</span>
<div class="a fld" style="left:266px;top:264.6px;width:32px;height:10.4px;background:#fff;"></div>
<span class="a t " style="left:270.4px;top:265.15px;font-size:7.3px;line-height:9.3px;color:#000;transform:scaleX(0.8);">15.000</span>
<span class="a t " style="left:300px;top:265.5px;font-size:7px;line-height:9px;transform:scaleX(0.76);">mm/s</span>
<span class="a t " style="left:232px;top:279.75px;font-size:7.3px;line-height:9.3px;transform:scaleX(0.838);">Ускорение:</span>
<div class="a fld" style="left:266px;top:278.4px;width:32px;height:10px;background:#fff;"></div>
<span class="a t " style="left:270.4px;top:278.75px;font-size:7.3px;line-height:9.3px;color:#000;transform:scaleX(0.8);">4500.000</span>
<span class="a t " style="left:300px;top:279.5px;font-size:7px;line-height:9px;transform:scaleX(0.829);">mm/s2</span>
<div class="a fld" style="left:352.8px;top:271.1px;width:7px;height:7px;background:#fff;"></div>
<span class="a t " style="left:362px;top:266.95px;font-size:7.3px;line-height:9.3px;transform:scaleX(0.864);">Инвертировать</span>
<span class="a t " style="left:362px;top:273.95px;font-size:7.3px;line-height:9.3px;transform:scaleX(0.866);">движение с кнопок</span>
<span class="a t " style="left:194px;top:293.75px;font-size:7.3px;line-height:9.3px;transform:scaleX(0.852);">Тип датчика: NO - негатив, NC - позитив.</span>
<span class="a t " style="left:194px;top:302.95px;font-size:7.3px;line-height:9.3px;transform:scaleX(0.843);">Полярность направления: Определяется относительно декартового нуля по выбранной оси.</span>
<div class="a " style="left:153.2px;top:324px;width:311.2px;height:0.7px;background:#a4a29c;"></div>
<div class="a " style="left:153.2px;top:324.7px;width:311.2px;height:0.8px;background:#fbfaf8;"></div>
<div class="a fld" style="left:153.6px;top:328px;width:150.8px;height:13.2px;background:#d4d0c8;"></div>
<div class="a btn" style="left:306.4px;top:328.4px;width:30.6px;height:12.2px;"></div>
<span class="a t " style="left:309.7px;top:329.35px;font-size:7.3px;line-height:9.3px;transform:scaleX(0.877);">Считать</span>
<div class="a btn" style="left:338.4px;top:328.4px;width:30px;height:12.2px;"></div>
<span class="a t " style="left:340.6px;top:329.65px;font-size:7.3px;line-height:9.3px;color:#8a8780;transform:scaleX(0.821);text-shadow:.6px .6px 0 #fff;">Записать</span>
<div class="a " style="left:369.6px;top:328.2px;width:31.6px;height:12.6px;background:#000;"></div>
<div class="a btn" style="left:370.3px;top:328.9px;width:30.2px;height:11.2px;"></div>
<span class="a t " style="left:372.9px;top:329.35px;font-size:7.3px;line-height:9.3px;transform:scaleX(0.872);">Открыть</span>
<div class="a btn" style="left:402.2px;top:328.4px;width:29.8px;height:12.2px;"></div>
<span class="a t " style="left:408.27px;top:329.35px;font-size:7.3px;line-height:9.3px;transform:scaleX(0.93);">Сохр.</span>
<div class="a btn" style="left:419px;top:348.8px;width:45px;height:13px;border-right:1.2px solid #3a3a3a;border-bottom:1.2px solid #3a3a3a;"></div>
<span class="a t " style="left:432.2px;top:350.15px;font-size:7.3px;line-height:9.3px;transform:scaleX(0.852);">Выход</span>
<svg class="a" style="left:384.6px;top:113.6px" width="8" height="12.6" viewBox="0 0 8 12.6"><path d="M.8 .8 V10 L2.8 8.2 L4.4 11.8 L5.8 11.2 L4.2 7.6 L7 7.4 Z" fill="#fff" stroke="#000" stroke-width=".8" stroke-linejoin="round"/></svg>
<span class="a t " style="left:4.8px;top:506.75px;font-size:6.5px;line-height:8.5px;color:#000;font-weight:bold;transform:scaleX(0.93);">x</span>
<div class="a " style="left:5px;top:515.8px;width:3.4px;height:5px;background:#e8e6e2;border:.6px solid #9a9890;"></div>
<div class="a " style="left:14.1px;top:507.8px;width:12.3px;height:13.4px;background:#000000;"></div>
<div class="a " style="left:14.1px;top:507.2px;width:12.3px;height:0.6px;background:#8c8a84;"></div>
<div class="a " style="left:13.5px;top:507.2px;width:0.6px;height:14px;background:#8c8a84;"></div>
<div class="a " style="left:14.1px;top:521.2px;width:12.6px;height:0.6px;background:#fff;"></div>
<div class="a " style="left:28.33px;top:507.8px;width:12.3px;height:13.4px;background:#0000ff;"></div>
<div class="a " style="left:28.33px;top:507.2px;width:12.3px;height:0.6px;background:#8c8a84;"></div>
<div class="a " style="left:27.73px;top:507.2px;width:0.6px;height:14px;background:#8c8a84;"></div>
<div class="a " style="left:28.33px;top:521.2px;width:12.6px;height:0.6px;background:#fff;"></div>
<div class="a " style="left:42.56px;top:507.8px;width:12.3px;height:13.4px;background:#ff0000;"></div>
<div class="a " style="left:42.56px;top:507.2px;width:12.3px;height:0.6px;background:#8c8a84;"></div>
<div class="a " style="left:41.96px;top:507.2px;width:0.6px;height:14px;background:#8c8a84;"></div>
<div class="a " style="left:42.56px;top:521.2px;width:12.6px;height:0.6px;background:#fff;"></div>
<div class="a " style="left:56.79px;top:507.8px;width:12.3px;height:13.4px;background:#00ff00;"></div>
<div class="a " style="left:56.79px;top:507.2px;width:12.3px;height:0.6px;background:#8c8a84;"></div>
<div class="a " style="left:56.19px;top:507.2px;width:0.6px;height:14px;background:#8c8a84;"></div>
<div class="a " style="left:56.79px;top:521.2px;width:12.6px;height:0.6px;background:#fff;"></div>
<div class="a " style="left:71.02px;top:507.8px;width:12.3px;height:13.4px;background:#fa8072;"></div>
<div class="a " style="left:71.02px;top:507.2px;width:12.3px;height:0.6px;background:#8c8a84;"></div>
<div class="a " style="left:70.42px;top:507.2px;width:0.6px;height:14px;background:#8c8a84;"></div>
<div class="a " style="left:71.02px;top:521.2px;width:12.6px;height:0.6px;background:#fff;"></div>
<div class="a " style="left:85.25px;top:507.8px;width:12.3px;height:13.4px;background:#ffff00;"></div>
<div class="a " style="left:85.25px;top:507.2px;width:12.3px;height:0.6px;background:#8c8a84;"></div>
<div class="a " style="left:84.65px;top:507.2px;width:0.6px;height:14px;background:#8c8a84;"></div>
<div class="a " style="left:85.25px;top:521.2px;width:12.6px;height:0.6px;background:#fff;"></div>
<div class="a " style="left:99.48px;top:507.8px;width:12.3px;height:13.4px;background:#1e90ff;"></div>
<div class="a " style="left:99.48px;top:507.2px;width:12.3px;height:0.6px;background:#8c8a84;"></div>
<div class="a " style="left:98.88px;top:507.2px;width:0.6px;height:14px;background:#8c8a84;"></div>
<div class="a " style="left:99.48px;top:521.2px;width:12.6px;height:0.6px;background:#fff;"></div>
<div class="a " style="left:113.71px;top:507.8px;width:12.3px;height:13.4px;background:#8b3a12;"></div>
<div class="a " style="left:113.71px;top:507.2px;width:12.3px;height:0.6px;background:#8c8a84;"></div>
<div class="a " style="left:113.11px;top:507.2px;width:0.6px;height:14px;background:#8c8a84;"></div>
<div class="a " style="left:113.71px;top:521.2px;width:12.6px;height:0.6px;background:#fff;"></div>
<div class="a " style="left:127.94px;top:507.8px;width:12.3px;height:13.4px;background:#808000;"></div>
<div class="a " style="left:127.94px;top:507.2px;width:12.3px;height:0.6px;background:#8c8a84;"></div>
<div class="a " style="left:127.34px;top:507.2px;width:0.6px;height:14px;background:#8c8a84;"></div>
<div class="a " style="left:127.94px;top:521.2px;width:12.6px;height:0.6px;background:#fff;"></div>
<div class="a " style="left:142.17px;top:507.8px;width:12.3px;height:13.4px;background:#008060;"></div>
<div class="a " style="left:142.17px;top:507.2px;width:12.3px;height:0.6px;background:#8c8a84;"></div>
<div class="a " style="left:141.57px;top:507.2px;width:0.6px;height:14px;background:#8c8a84;"></div>
<div class="a " style="left:142.17px;top:521.2px;width:12.6px;height:0.6px;background:#fff;"></div>
<div class="a " style="left:156.4px;top:507.8px;width:12.3px;height:13.4px;background:#ff4500;"></div>
<div class="a " style="left:156.4px;top:507.2px;width:12.3px;height:0.6px;background:#8c8a84;"></div>
<div class="a " style="left:155.8px;top:507.2px;width:0.6px;height:14px;background:#8c8a84;"></div>
<div class="a " style="left:156.4px;top:521.2px;width:12.6px;height:0.6px;background:#fff;"></div>
<div class="a " style="left:170.63px;top:507.8px;width:12.3px;height:13.4px;background:#42008a;"></div>
<div class="a " style="left:170.63px;top:507.2px;width:12.3px;height:0.6px;background:#8c8a84;"></div>
<div class="a " style="left:170.03px;top:507.2px;width:0.6px;height:14px;background:#8c8a84;"></div>
<div class="a " style="left:170.63px;top:521.2px;width:12.6px;height:0.6px;background:#fff;"></div>
<div class="a " style="left:184.86px;top:507.8px;width:12.3px;height:13.4px;background:#ffd2da;"></div>
<div class="a " style="left:184.86px;top:507.2px;width:12.3px;height:0.6px;background:#8c8a84;"></div>
<div class="a " style="left:184.26px;top:507.2px;width:0.6px;height:14px;background:#8c8a84;"></div>
<div class="a " style="left:184.86px;top:521.2px;width:12.6px;height:0.6px;background:#fff;"></div>
<div class="a " style="left:199.09px;top:507.8px;width:12.3px;height:13.4px;background:#b0a0f4;"></div>
<div class="a " style="left:199.09px;top:507.2px;width:12.3px;height:0.6px;background:#8c8a84;"></div>
<div class="a " style="left:198.49px;top:507.2px;width:0.6px;height:14px;background:#8c8a84;"></div>
<div class="a " style="left:199.09px;top:521.2px;width:12.6px;height:0.6px;background:#fff;"></div>
<div class="a " style="left:213.32px;top:507.8px;width:12.3px;height:13.4px;background:#d4f4a0;"></div>
<div class="a " style="left:213.32px;top:507.2px;width:12.3px;height:0.6px;background:#8c8a84;"></div>
<div class="a " style="left:212.72px;top:507.2px;width:0.6px;height:14px;background:#8c8a84;"></div>
<div class="a " style="left:213.32px;top:521.2px;width:12.6px;height:0.6px;background:#fff;"></div>
<div class="a " style="left:227.55px;top:507.8px;width:12.3px;height:13.4px;background:#f49050;"></div>
<div class="a " style="left:227.55px;top:507.2px;width:12.3px;height:0.6px;background:#8c8a84;"></div>
<div class="a " style="left:226.95px;top:507.2px;width:0.6px;height:14px;background:#8c8a84;"></div>
<div class="a " style="left:227.55px;top:521.2px;width:12.6px;height:0.6px;background:#fff;"></div>
<div class="a " style="left:241.78px;top:507.8px;width:12.3px;height:13.4px;background:#dc7096;"></div>
<div class="a " style="left:241.78px;top:507.2px;width:12.3px;height:0.6px;background:#8c8a84;"></div>
<div class="a " style="left:241.18px;top:507.2px;width:0.6px;height:14px;background:#8c8a84;"></div>
<div class="a " style="left:241.78px;top:521.2px;width:12.6px;height:0.6px;background:#fff;"></div>
<div class="a " style="left:256.01px;top:507.8px;width:12.3px;height:13.4px;background:#9070dc;"></div>
<div class="a " style="left:256.01px;top:507.2px;width:12.3px;height:0.6px;background:#8c8a84;"></div>
<div class="a " style="left:255.41px;top:507.2px;width:0.6px;height:14px;background:#8c8a84;"></div>
<div class="a " style="left:256.01px;top:521.2px;width:12.6px;height:0.6px;background:#fff;"></div>
<div class="a " style="left:270.24px;top:507.8px;width:12.3px;height:13.4px;background:#70d870;"></div>
<div class="a " style="left:270.24px;top:507.2px;width:12.3px;height:0.6px;background:#8c8a84;"></div>
<div class="a " style="left:269.64px;top:507.2px;width:0.6px;height:14px;background:#8c8a84;"></div>
<div class="a " style="left:270.24px;top:521.2px;width:12.6px;height:0.6px;background:#fff;"></div>
<div class="a " style="left:284.47px;top:507.8px;width:12.3px;height:13.4px;background:#bca870;"></div>
<div class="a " style="left:284.47px;top:507.2px;width:12.3px;height:0.6px;background:#8c8a84;"></div>
<div class="a " style="left:283.87px;top:507.2px;width:0.6px;height:14px;background:#8c8a84;"></div>
<div class="a " style="left:284.47px;top:521.2px;width:12.6px;height:0.6px;background:#fff;"></div>
<div class="a " style="left:0px;top:523.2px;width:850px;height:0.7px;background:#a4a29c;"></div>
<div class="a " style="left:0px;top:523.9px;width:850px;height:0.7px;background:#f6f5f2;"></div>
<div class="a " style="left:2.4px;top:525.6px;width:442.6px;height:9.8px;border-top:.7px solid #8c8a84;border-left:.7px solid #8c8a84;border-right:.7px solid #fff;border-bottom:.7px solid #fff;"></div>
<span class="a t " style="left:5px;top:526.1px;font-size:7px;line-height:9px;color:#111;transform:scaleX(0.884);">&lt;&lt; * Добро пожаловать в систему управления лазерной резкой. Рекомендуемое разрешение экрана 1024*768 и выше * &gt;&gt;</span>
<div class="a " style="left:446.6px;top:525.6px;width:11.2px;height:9.8px;border-top:.7px solid #8c8a84;border-left:.7px solid #8c8a84;border-right:.7px solid #fff;border-bottom:.7px solid #fff;"></div>
<div class="a " style="left:459.2px;top:525.6px;width:134.8px;height:9.8px;border-top:.7px solid #8c8a84;border-left:.7px solid #8c8a84;border-right:.7px solid #fff;border-bottom:.7px solid #fff;"></div>
<span class="a t " style="left:461.8px;top:526.1px;font-size:7px;line-height:9px;color:#111;transform:scaleX(0.871);">General mode,Общее количество:0</span>
<div class="a " style="left:595.2px;top:525.6px;width:99.8px;height:9.8px;border-top:.7px solid #8c8a84;border-left:.7px solid #8c8a84;border-right:.7px solid #fff;border-bottom:.7px solid #fff;"></div>
<div class="a " style="left:696.4px;top:525.6px;width:142.6px;height:9.8px;border-top:.7px solid #8c8a84;border-left:.7px solid #8c8a84;border-right:.7px solid #fff;border-bottom:.7px solid #fff;"></div>
<span class="a t " style="left:699px;top:526.1px;font-size:7px;line-height:9px;color:#111;transform:scaleX(0.851);">RDC6445S,X:618.943mm,Y:83.308mm</span>
<svg class="a" style="left:839.4px;top:526px" width="10" height="10" viewBox="0 0 10 10"><path d="M10 2 L2 10 M10 5 L5 10 M10 8 L8 10" stroke="#8c8a84" stroke-width=".8"/><path d="M10 3 L3 10 M10 6 L6 10" stroke="#fff" stroke-width=".7"/></svg>
</body></html>
